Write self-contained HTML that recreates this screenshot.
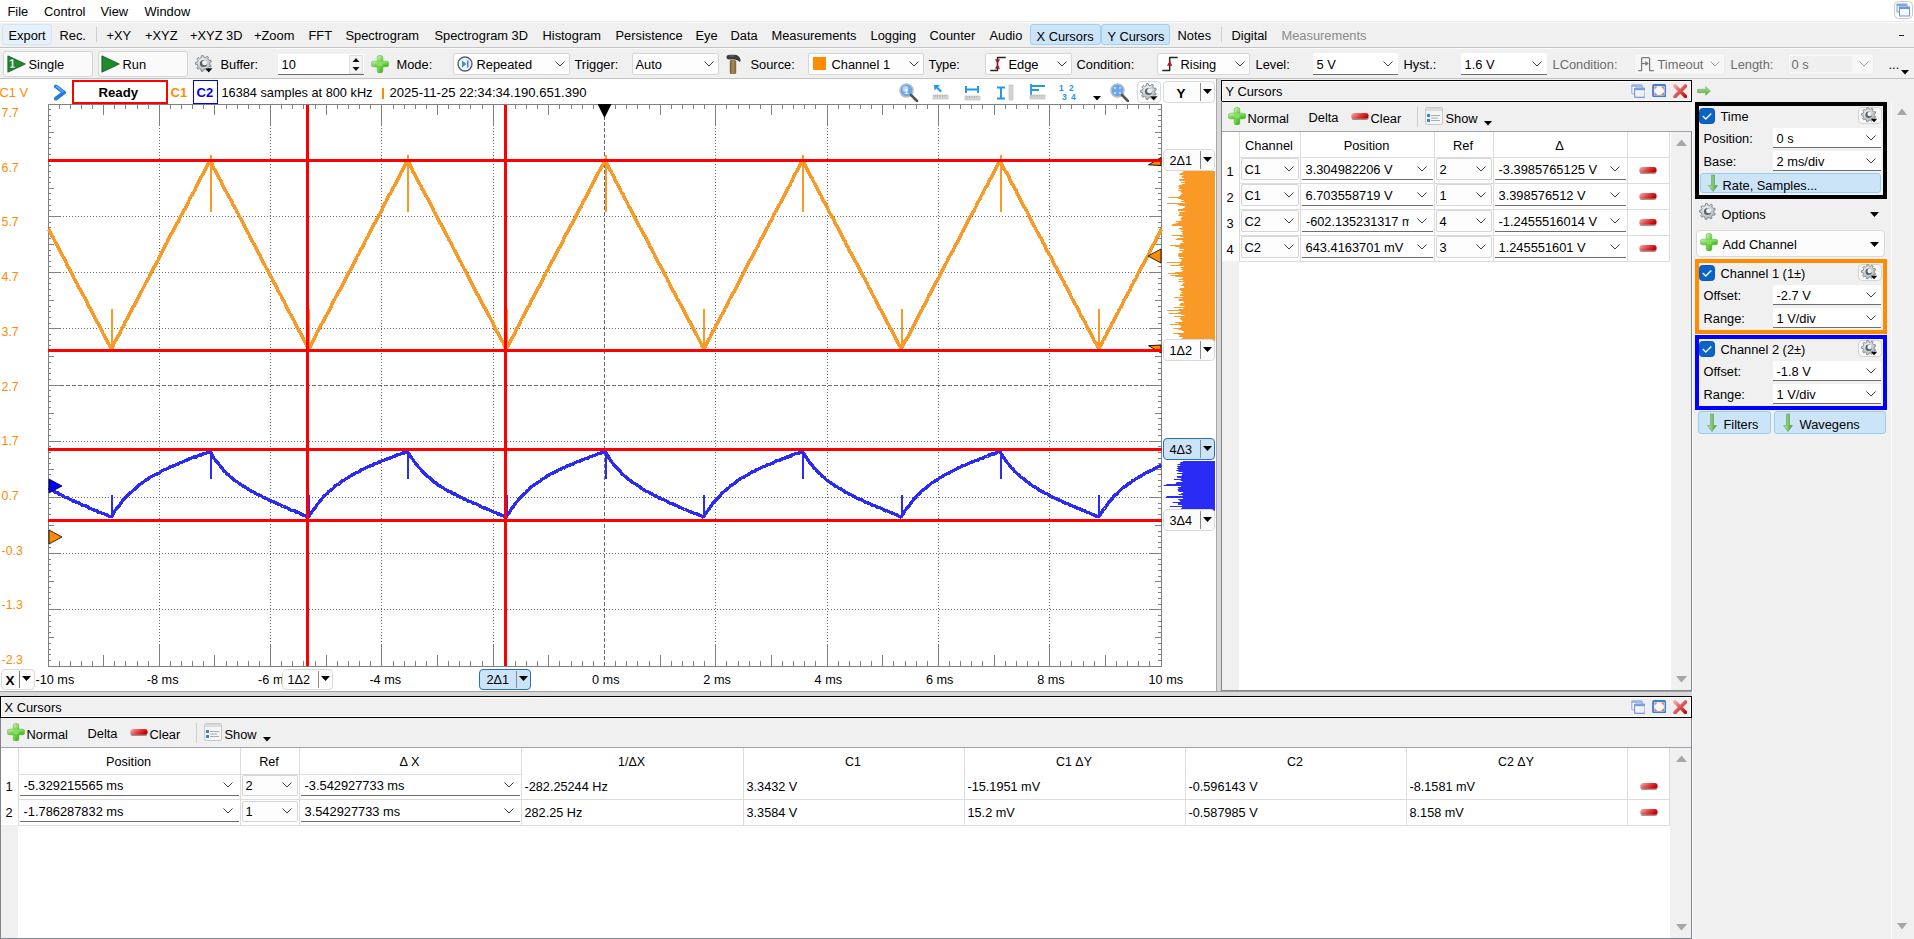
<!DOCTYPE html><html><head><meta charset="utf-8"><style>
html,body{margin:0;padding:0;width:1914px;height:939px;overflow:hidden;background:#f0f0f0;}
body{position:relative;font-family:"Liberation Sans",sans-serif;}
.r{position:absolute;}
.t{position:absolute;white-space:nowrap;font-family:"Liberation Sans",sans-serif;}
</style></head><body>
<div class="r" style="left:0px;top:0px;width:1914px;height:21px;background:#fff;"></div>
<div class="r" style="left:0px;top:21px;width:1914px;height:1px;background:#e8e8e8;"></div>
<div class="r" style="left:0px;top:22px;width:1914px;height:1px;background:#fdfdfd;"></div>
<div class="t" style="left:7.5px;top:5.12px;font-size:12.85px;line-height:14.353px;color:#000;">File</div>
<div class="t" style="left:44.0px;top:5.12px;font-size:12.85px;line-height:14.353px;color:#000;">Control</div>
<div class="t" style="left:100.5px;top:5.12px;font-size:12.85px;line-height:14.353px;color:#000;">View</div>
<div class="t" style="left:144.5px;top:5.12px;font-size:12.85px;line-height:14.353px;color:#000;">Window</div>
<svg class="r" style="left:1894px;top:1px;" width="19" height="18" viewBox="0 0 19 18"><rect x="0.5" y="0.5" width="18" height="17" rx="4" fill="#fff" stroke="#c8c8c8"/>
<rect x="3" y="3" width="10" height="8" fill="#eef3fb" stroke="#7fa5dc"/><rect x="3" y="3" width="10" height="2" fill="#7fa5dc"/>
<rect x="5.5" y="6" width="10" height="9" fill="#f4f7fc" stroke="#6f96d2"/><rect x="5.5" y="6" width="10" height="2" fill="#6f96d2"/></svg>
<div class="r" style="left:0px;top:23px;width:1914px;height:24px;background:#f0f0f0;"></div>
<div class="r" style="left:0px;top:47px;width:1914px;height:1px;background:#c4c4c4;"></div>
<div class="r" style="left:0px;top:48px;width:1914px;height:1px;background:#fbfbfb;"></div>
<div class="r" style="left:2px;top:24px;width:50px;height:21px;background:#e5f1fb;border:1px solid #d0e5f6;box-sizing:border-box;border-radius:3px;"></div>
<div class="r" style="left:1030px;top:24px;width:71px;height:21px;background:#cce4f7;border:1px solid #9fd0f5;box-sizing:border-box;border-radius:3px;"></div>
<div class="r" style="left:1101px;top:24px;width:69px;height:21px;background:#cce4f7;border:1px solid #9fd0f5;box-sizing:border-box;border-radius:3px;"></div>
<div class="r" style="left:96px;top:27px;width:1px;height:15px;background:#cfcfcf;"></div>
<div class="r" style="left:1221px;top:27px;width:1px;height:15px;background:#cfcfcf;"></div>
<div class="t" style="left:8.5px;top:29.12px;font-size:12.85px;line-height:14.353px;color:#000;">Export</div>
<div class="t" style="left:59.5px;top:29.12px;font-size:12.85px;line-height:14.353px;color:#000;">Rec.</div>
<div class="t" style="left:106.5px;top:29.12px;font-size:12.85px;line-height:14.353px;color:#000;">+XY</div>
<div class="t" style="left:145.0px;top:29.12px;font-size:12.85px;line-height:14.353px;color:#000;">+XYZ</div>
<div class="t" style="left:190.0px;top:29.12px;font-size:12.85px;line-height:14.353px;color:#000;">+XYZ 3D</div>
<div class="t" style="left:254.0px;top:29.12px;font-size:12.85px;line-height:14.353px;color:#000;">+Zoom</div>
<div class="t" style="left:308.5px;top:29.12px;font-size:12.85px;line-height:14.353px;color:#000;">FFT</div>
<div class="t" style="left:345.5px;top:29.12px;font-size:12.85px;line-height:14.353px;color:#000;">Spectrogram</div>
<div class="t" style="left:434.5px;top:29.12px;font-size:12.85px;line-height:14.353px;color:#000;">Spectrogram 3D</div>
<div class="t" style="left:542.5px;top:29.12px;font-size:12.85px;line-height:14.353px;color:#000;">Histogram</div>
<div class="t" style="left:615.5px;top:29.12px;font-size:12.85px;line-height:14.353px;color:#000;">Persistence</div>
<div class="t" style="left:695.5px;top:29.12px;font-size:12.85px;line-height:14.353px;color:#000;">Eye</div>
<div class="t" style="left:730.5px;top:29.12px;font-size:12.85px;line-height:14.353px;color:#000;">Data</div>
<div class="t" style="left:771.5px;top:29.12px;font-size:12.85px;line-height:14.353px;color:#000;">Measurements</div>
<div class="t" style="left:870.5px;top:29.12px;font-size:12.85px;line-height:14.353px;color:#000;">Logging</div>
<div class="t" style="left:929.5px;top:29.12px;font-size:12.85px;line-height:14.353px;color:#000;">Counter</div>
<div class="t" style="left:989.5px;top:29.12px;font-size:12.85px;line-height:14.353px;color:#000;">Audio</div>
<div class="t" style="left:1177.5px;top:29.12px;font-size:12.85px;line-height:14.353px;color:#000;">Notes</div>
<div class="t" style="left:1231.5px;top:29.12px;font-size:12.85px;line-height:14.353px;color:#000;">Digital</div>
<div class="t" style="left:1036.5px;top:30.12px;font-size:12.85px;line-height:14.353px;color:#000;">X Cursors</div>
<div class="t" style="left:1107.5px;top:30.12px;font-size:12.85px;line-height:14.353px;color:#000;">Y Cursors</div>
<div class="t" style="left:1281.5px;top:29.12px;font-size:12.85px;line-height:14.353px;color:#8a8a8a;">Measurements</div>
<div class="r" style="left:1899px;top:35px;width:5px;height:1px;background:#222;"></div>
<div class="r" style="left:0px;top:49px;width:1914px;height:29px;background:#f0f0f0;"></div>
<div class="r" style="left:0px;top:78px;width:1914px;height:1px;background:#c4c4c4;"></div>
<div class="r" style="left:3px;top:51px;width:90px;height:26px;background:#fafafa;border:1px solid #d4d4d4;box-sizing:border-box;border-radius:3px;"></div>
<div class="r" style="left:98px;top:51px;width:90px;height:26px;background:#fafafa;border:1px solid #d4d4d4;box-sizing:border-box;border-radius:3px;"></div>
<svg class="r" style="left:7px;top:55px;" width="19" height="18" viewBox="0 0 19 18"><path d="M1,1 L18,9 L1,17 Z" fill="#1f8a2a" stroke="#17702a" stroke-width="1.2" stroke-linejoin="round"/><path d="M2.6,5.3 L5,4 h1.6 v7.4 h1.6 v1.5 h-5.3 v-1.5 h1.6 v-5.3 l-1.9,0.8z" fill="#fff" stroke="#0d5a18" stroke-width="0.4"/></svg>
<svg class="r" style="left:101px;top:55px;" width="19" height="18" viewBox="0 0 19 18"><path d="M1,1 L18,9 L1,17 Z" fill="#1f8a2a" stroke="#17702a" stroke-width="1.2" stroke-linejoin="round"/></svg>
<div class="t" style="left:28.5px;top:58.12px;font-size:12.85px;line-height:14.353px;color:#000;">Single</div>
<div class="t" style="left:122.5px;top:58.12px;font-size:12.85px;line-height:14.353px;color:#000;">Run</div>
<svg class="r" style="left:195px;top:55px;" width="19" height="19" viewBox="0 0 19 19"><defs><radialGradient id="gg" cx="40%" cy="35%" r="70%"><stop offset="0" stop-color="#f4f5f6"/><stop offset="1" stop-color="#a9afb5"/></radialGradient></defs><path d="M14.70,9.59 L16.23,10.54 L15.56,12.26 L13.80,11.91 L12.55,13.33 L13.11,15.04 L11.50,15.92 L10.36,14.52 L8.50,14.80 L7.83,16.47 L6.03,16.11 L6.06,14.31 L4.45,13.33 L2.86,14.18 L1.72,12.74 L2.90,11.38 L2.30,9.59 L0.53,9.23 L0.58,7.39 L2.36,7.10 L3.04,5.35 L1.93,3.93 L3.15,2.55 L4.69,3.48 L6.35,2.58 L6.40,0.78 L8.22,0.50 L8.81,2.21 L10.65,2.58 L11.86,1.24 L13.43,2.20 L12.78,3.88 L13.96,5.35 L15.74,5.09 L16.33,6.84 L14.75,7.71z" fill="url(#gg)" stroke="#7d858c" stroke-width="0.9"/><circle cx="8.5" cy="8.5" r="3.6" fill="#56616b"/><circle cx="9.6" cy="7.8" r="2.5" fill="#eef0f2"/><path d="M9.5,13 h8.5 l-4.25,4.8 z" fill="#000" stroke="#fff" stroke-width="0.6"/></svg>
<div class="t" style="left:220.5px;top:58.12px;font-size:12.85px;line-height:14.353px;color:#000;">Buffer:</div>
<div class="r" style="left:278px;top:54px;width:86px;height:21px;background:#fff;border-bottom:1px solid #6e6e6e;box-sizing:border-box;"></div>
<div class="t" style="left:281.5px;top:58.12px;font-size:12.85px;line-height:14.353px;color:#000;">10</div>
<div class="r" style="left:349px;top:55px;width:14px;height:19px;background:#f4f4f4;border:1px solid #e0e0e0;box-sizing:border-box;"></div>
<svg class="r" style="left:350px;top:56px;" width="12" height="17" viewBox="0 0 12 17"><path d="M2.5,6 h7 l-3.5,-4 z M2.5,11 h7 l-3.5,4 z" fill="#111"/></svg>
<svg class="r" style="left:371px;top:55px;" width="18" height="18" viewBox="0 0 18 18"><defs><linearGradient id="pg" x1="0" y1="0" x2="0.7" y2="1"><stop offset="0" stop-color="#c8f8ae"/><stop offset="1" stop-color="#3cbc12"/></linearGradient></defs><rect x="6.2" y="0.5" width="5.6" height="17.5" rx="2.2" fill="url(#pg)" stroke="#52a83a" stroke-width="0.5"/><rect x="0.3" y="6.2" width="17.4" height="5.6" rx="2.2" fill="url(#pg)" stroke="#52a83a" stroke-width="0.5"/><rect x="6.6" y="6.5" width="4.8" height="5" fill="#86de62"/></svg>
<div class="t" style="left:396.5px;top:58.12px;font-size:12.85px;line-height:14.353px;color:#000;">Mode:</div>
<div class="r" style="left:453px;top:53px;width:117px;height:22px;background:#fdfdfd;border:1px solid #d6d6d6;box-sizing:border-box;border-radius:2px;"></div>
<div class="t" style="left:476.5px;top:58.12px;font-size:12.85px;line-height:14.353px;color:#000;">Repeated</div>
<svg class="r" style="left:555px;top:61px;" width="10" height="6" viewBox="0 0 10 6"><polyline points="0.5,0.5 5,5 9.5,0.5" fill="none" stroke="#404040" stroke-width="1"/></svg>
<svg class="r" style="left:457px;top:56px;" width="16" height="16" viewBox="0 0 16 16"><circle cx="8" cy="8" r="7" fill="#eef2f8" stroke="#5a5f66" stroke-width="1.4"/><path d="M5,4.5 L9.5,8 L5,11.5z M10,4.5 h1.6 v7 h-1.6z" fill="#3c8ee0"/></svg>
<div class="t" style="left:574.5px;top:58.12px;font-size:12.85px;line-height:14.353px;color:#000;">Trigger:</div>
<div class="r" style="left:632px;top:53px;width:87px;height:22px;background:#fdfdfd;border:1px solid #d6d6d6;box-sizing:border-box;border-radius:2px;"></div>
<div class="t" style="left:635.5px;top:58.12px;font-size:12.85px;line-height:14.353px;color:#000;">Auto</div>
<svg class="r" style="left:704px;top:61px;" width="10" height="6" viewBox="0 0 10 6"><polyline points="0.5,0.5 5,5 9.5,0.5" fill="none" stroke="#404040" stroke-width="1"/></svg>
<svg class="r" style="left:724px;top:53px;" width="18" height="22" viewBox="0 0 18 22"><defs><linearGradient id="hg" x1="0" y1="0" x2="1" y2="0"><stop offset="0" stop-color="#6e5228"/><stop offset="0.45" stop-color="#a88a58"/><stop offset="1" stop-color="#7a6238"/></linearGradient></defs><rect x="5.8" y="7" width="6.4" height="14" rx="1.6" fill="url(#hg)"/><path d="M2.4,4.2 q0.4,-2.4 3.5,-2.4 h4.6 q4.3,0 6,4.6 q0.3,1.6 -0.6,2.6 q-2.2,-2.6 -5.4,-2.6 h-5.6 q-2.2,0 -2.5,-2.2z" fill="#3b3b3b"/><path d="M5.5,3 h5" stroke="#777" stroke-width="0.8"/></svg>
<div class="t" style="left:750.5px;top:58.12px;font-size:12.85px;line-height:14.353px;color:#000;">Source:</div>
<div class="r" style="left:808px;top:53px;width:116px;height:22px;background:#fdfdfd;border:1px solid #d6d6d6;box-sizing:border-box;border-radius:2px;"></div>
<div class="t" style="left:831.5px;top:58.12px;font-size:12.85px;line-height:14.353px;color:#000;">Channel 1</div>
<svg class="r" style="left:909px;top:61px;" width="10" height="6" viewBox="0 0 10 6"><polyline points="0.5,0.5 5,5 9.5,0.5" fill="none" stroke="#404040" stroke-width="1"/></svg>
<div class="r" style="left:813px;top:57px;width:13px;height:13px;background:#ff8b00;"></div>
<div class="t" style="left:928.5px;top:58.12px;font-size:12.85px;line-height:14.353px;color:#000;">Type:</div>
<div class="r" style="left:985px;top:53px;width:87px;height:22px;background:#fdfdfd;border:1px solid #d6d6d6;box-sizing:border-box;border-radius:2px;"></div>
<div class="t" style="left:1008.5px;top:58.12px;font-size:12.85px;line-height:14.353px;color:#000;">Edge</div>
<svg class="r" style="left:1057px;top:61px;" width="10" height="6" viewBox="0 0 10 6"><polyline points="0.5,0.5 5,5 9.5,0.5" fill="none" stroke="#404040" stroke-width="1"/></svg>
<svg class="r" style="left:984px;top:52px;" width="30" height="24" viewBox="0 0 30 24"><path d="M6.3,18.6 h7.2 v-13.2 h8.2" fill="none" stroke="#262626" stroke-width="1.5" stroke-linejoin="round"/><path d="M11,7.3 h5 l-2.5,4.7z M11,16.7 h5 l-2.5,-4.7z" fill="#b3161c"/></svg>
<div class="t" style="left:1076.5px;top:58.12px;font-size:12.85px;line-height:14.353px;color:#000;">Condition:</div>
<div class="r" style="left:1157px;top:53px;width:93px;height:22px;background:#fdfdfd;border:1px solid #d6d6d6;box-sizing:border-box;border-radius:2px;"></div>
<div class="t" style="left:1180.5px;top:58.12px;font-size:12.85px;line-height:14.353px;color:#000;">Rising</div>
<svg class="r" style="left:1235px;top:61px;" width="10" height="6" viewBox="0 0 10 6"><polyline points="0.5,0.5 5,5 9.5,0.5" fill="none" stroke="#404040" stroke-width="1"/></svg>
<svg class="r" style="left:1156px;top:52px;" width="30" height="24" viewBox="0 0 30 24"><path d="M6.3,18.6 h7.4 v-13.2 h8" fill="none" stroke="#262626" stroke-width="1.5" stroke-linejoin="round"/><path d="M11,13.8 h5.4 l-2.7,-5z" fill="#b3161c"/></svg>
<div class="t" style="left:1255.5px;top:58.12px;font-size:12.85px;line-height:14.353px;color:#000;">Level:</div>
<div class="r" style="left:1313px;top:53px;width:85px;height:22px;background:#fff;border-bottom:1px solid #6e6e6e;box-sizing:border-box;border-radius:2px 2px 0 0;"></div>
<div class="t" style="left:1316.5px;top:58.12px;font-size:12.85px;line-height:14.353px;color:#000;">5 V</div>
<svg class="r" style="left:1383px;top:61px;" width="10" height="6" viewBox="0 0 10 6"><polyline points="0.5,0.5 5,5 9.5,0.5" fill="none" stroke="#404040" stroke-width="1"/></svg>
<div class="t" style="left:1403.5px;top:58.12px;font-size:12.85px;line-height:14.353px;color:#000;">Hyst.:</div>
<div class="r" style="left:1461px;top:53px;width:86px;height:22px;background:#fff;border-bottom:1px solid #6e6e6e;box-sizing:border-box;border-radius:2px 2px 0 0;"></div>
<div class="t" style="left:1464.5px;top:58.12px;font-size:12.85px;line-height:14.353px;color:#000;">1.6 V</div>
<svg class="r" style="left:1532px;top:61px;" width="10" height="6" viewBox="0 0 10 6"><polyline points="0.5,0.5 5,5 9.5,0.5" fill="none" stroke="#404040" stroke-width="1"/></svg>
<div class="t" style="left:1552.5px;top:58.12px;font-size:12.85px;line-height:14.353px;color:#6d6d6d;">LCondition:</div>
<div class="r" style="left:1634px;top:53px;width:91px;height:22px;background:#f7f7f7;border:1px solid #ebebeb;box-sizing:border-box;border-radius:2px;"></div>
<div class="t" style="left:1657.5px;top:58.12px;font-size:12.85px;line-height:14.353px;color:#6d6d6d;">Timeout</div>
<svg class="r" style="left:1710px;top:61px;" width="10" height="6" viewBox="0 0 10 6"><polyline points="0.5,0.5 5,5 9.5,0.5" fill="none" stroke="#a0a0a0" stroke-width="1"/></svg>
<svg class="r" style="left:1632px;top:52px;" width="30" height="24" viewBox="0 0 30 24"><path d="M6.2,18.6 h3.4 v-12 q0,-1 1,-1 h6 q1,0 1,1 v12 h4.3" fill="none" stroke="#7a7a7a" stroke-width="1.3" stroke-linejoin="round"/><path d="M9.6,11.5 h4" stroke="#7a7a7a" stroke-width="1.2"/><path d="M13.3,9 l3.6,2.5 -3.6,2.5z" fill="#7a7a7a"/></svg>
<div class="t" style="left:1730.5px;top:58.12px;font-size:12.85px;line-height:14.353px;color:#6d6d6d;">Length:</div>
<div class="r" style="left:1788px;top:53px;width:86px;height:22px;background:#f7f7f7;border:1px solid #ebebeb;box-sizing:border-box;border-radius:2px;"></div>
<div class="r" style="left:1790px;top:56px;width:62px;height:16px;background:#efefef;"></div>
<div class="t" style="left:1791.5px;top:58.12px;font-size:12.85px;line-height:14.353px;color:#6d6d6d;">0 s</div>
<svg class="r" style="left:1859px;top:61px;" width="10" height="6" viewBox="0 0 10 6"><polyline points="0.5,0.5 5,5 9.5,0.5" fill="none" stroke="#a0a0a0" stroke-width="1"/></svg>
<div class="t" style="left:1888.5px;top:58.12px;font-size:12.85px;line-height:14.353px;color:#000;">...</div>
<svg class="r" style="left:1901px;top:70px;" width="8" height="5" viewBox="0 0 8 5"><path d="M0,0 h8 l-4,4.5z" fill="#000"/></svg>
<div class="r" style="left:0px;top:79px;width:1216px;height:612px;background:#fff;"></div>
<div class="t" style="left:-0.5px;top:86.12px;font-size:12.85px;line-height:14.353px;color:#ff8c00;">C1 V</div>
<svg class="r" style="left:53px;top:84px;" width="15" height="17" viewBox="0 0 15 17"><polyline points="3,2.5 11,8.5 3,14.5" fill="none" stroke="#2478e0" stroke-width="4" stroke-linecap="round" stroke-linejoin="round"/><polyline points="3.5,2.5 10,7.5" fill="none" stroke="#7ab4f5" stroke-width="1.2" stroke-linecap="round"/></svg>
<div class="r" style="left:72px;top:80px;width:96px;height:24px;border:2px solid #ff0000;box-sizing:border-box;background:#fff;"></div>
<div class="t" style="left:98.5px;top:85.80px;font-size:13.2px;line-height:14.744px;color:#000;font-weight:bold;">Ready</div>
<div class="t" style="left:170.5px;top:85.98px;font-size:13px;line-height:14.521px;color:#ff8c00;font-weight:bold;">C1</div>
<div class="r" style="left:193px;top:80px;width:25px;height:24px;border:1px solid #0000ff;box-sizing:border-box;"></div>
<div class="t" style="left:196.5px;top:85.98px;font-size:13px;line-height:14.521px;color:#0000ff;font-weight:bold;">C2</div>
<div class="t" style="left:221.5px;top:86.21px;font-size:12.75px;line-height:14.242px;color:#000;">16384 samples at 800 kHz</div>
<div class="r" style="left:382px;top:88px;width:2px;height:11px;background:#ff8c00;"></div>
<div class="t" style="left:389.5px;top:85.89px;font-size:13.1px;line-height:14.633px;color:#000;">2025-11-25 22:34:34.190.651.390</div>
<svg class="r" style="left:899px;top:83px;" width="20" height="19" viewBox="0 0 20 19"><circle cx="7.5" cy="7.5" r="6.5" fill="#6aa6ec" stroke="#b8bcc4" stroke-width="1.6"/><circle cx="6.5" cy="6" r="3" fill="#b9d6f6"/><text x="5" y="10.5" font-family="Liberation Sans" font-weight="bold" font-size="8" fill="#fff">1</text><line x1="12" y1="12" x2="18" y2="18" stroke="#555" stroke-width="2.6" stroke-linecap="round"/></svg>
<svg class="r" style="left:932px;top:84px;" width="17" height="16" viewBox="0 0 17 16"><path d="M2,1 l6,0 -2,2 4,4 -1.5,1.5 -4,-4 -2,2z" fill="#2196f3"/><rect x="1" y="11" width="15" height="4" fill="#d4d4d4" stroke="#b8b8b8" stroke-width="0.6"/><line x1="3.0" y1="11" x2="3.0" y2="13" stroke="#999" stroke-width="0.5"/><line x1="5.5" y1="11" x2="5.5" y2="13" stroke="#999" stroke-width="0.5"/><line x1="8.0" y1="11" x2="8.0" y2="13" stroke="#999" stroke-width="0.5"/><line x1="10.5" y1="11" x2="10.5" y2="13" stroke="#999" stroke-width="0.5"/><line x1="13.0" y1="11" x2="13.0" y2="13" stroke="#999" stroke-width="0.5"/></svg>
<svg class="r" style="left:964px;top:84px;" width="18" height="17" viewBox="0 0 18 17"><path d="M2,2 v7 M2,5.5 h12 M14,2 v7" fill="none" stroke="#2196f3" stroke-width="2"/><rect x="1" y="12" width="15" height="4" fill="#d4d4d4" stroke="#b8b8b8" stroke-width="0.6"/><line x1="3.0" y1="12" x2="3.0" y2="14" stroke="#999" stroke-width="0.5"/><line x1="5.5" y1="12" x2="5.5" y2="14" stroke="#999" stroke-width="0.5"/><line x1="8.0" y1="12" x2="8.0" y2="14" stroke="#999" stroke-width="0.5"/><line x1="10.5" y1="12" x2="10.5" y2="14" stroke="#999" stroke-width="0.5"/><line x1="13.0" y1="12" x2="13.0" y2="14" stroke="#999" stroke-width="0.5"/></svg>
<svg class="r" style="left:996px;top:84px;" width="18" height="17" viewBox="0 0 18 17"><path d="M1,3.5 h8 M5,3.5 v11 M1,14.5 h8" fill="none" stroke="#2196f3" stroke-width="2"/><rect x="13" y="1" width="4" height="15" fill="#d4d4d4" stroke="#b8b8b8" stroke-width="0.6"/></svg>
<svg class="r" style="left:1029px;top:83px;" width="17" height="17" viewBox="0 0 17 17"><path d="M2,1 v11 M2,3 h14 M2,7 h8" fill="none" stroke="#2196f3" stroke-width="1.8"/><rect x="1" y="12" width="15" height="4" fill="#d4d4d4" stroke="#b8b8b8" stroke-width="0.6"/><line x1="3.0" y1="12" x2="3.0" y2="14" stroke="#999" stroke-width="0.5"/><line x1="5.5" y1="12" x2="5.5" y2="14" stroke="#999" stroke-width="0.5"/><line x1="8.0" y1="12" x2="8.0" y2="14" stroke="#999" stroke-width="0.5"/><line x1="10.5" y1="12" x2="10.5" y2="14" stroke="#999" stroke-width="0.5"/><line x1="13.0" y1="12" x2="13.0" y2="14" stroke="#999" stroke-width="0.5"/></svg>
<svg class="r" style="left:1058px;top:83px;" width="20" height="18" viewBox="0 0 20 18"><text x="1" y="8" font-family="Liberation Sans" font-weight="bold" font-size="8.5" fill="#2196f3">1</text><text x="11" y="8" font-family="Liberation Sans" font-weight="bold" font-size="8.5" fill="#2196f3">2</text><text x="4" y="17" font-family="Liberation Sans" font-weight="bold" font-size="8.5" fill="#2196f3">3</text><text x="13" y="17" font-family="Liberation Sans" font-weight="bold" font-size="8.5" fill="#2196f3">4</text></svg>
<svg class="r" style="left:1093px;top:96px;" width="8" height="5" viewBox="0 0 8 5"><path d="M0,0 h8 l-4,4.5z" fill="#000"/></svg>
<svg class="r" style="left:1110px;top:83px;" width="19" height="19" viewBox="0 0 19 19"><circle cx="7.5" cy="7.5" r="6.5" fill="#6aa6ec" stroke="#b8bcc4" stroke-width="1.6"/><circle cx="5" cy="5" r="1" fill="#dbe8f8"/><circle cx="10" cy="5" r="1" fill="#dbe8f8"/><circle cx="5" cy="10" r="1" fill="#dbe8f8"/><circle cx="10" cy="10" r="1" fill="#dbe8f8"/><line x1="12" y1="12" x2="18" y2="18" stroke="#555" stroke-width="2.6" stroke-linecap="round"/></svg>
<div class="r" style="left:1137px;top:81px;width:24px;height:22px;background:#fcfcfc;border:1px solid #d9d9d9;box-sizing:border-box;border-radius:4px;"></div>
<svg class="r" style="left:1140px;top:83px;" width="19" height="19" viewBox="0 0 19 19"><defs><radialGradient id="gg" cx="40%" cy="35%" r="70%"><stop offset="0" stop-color="#f4f5f6"/><stop offset="1" stop-color="#a9afb5"/></radialGradient></defs><path d="M14.70,9.59 L16.23,10.54 L15.56,12.26 L13.80,11.91 L12.55,13.33 L13.11,15.04 L11.50,15.92 L10.36,14.52 L8.50,14.80 L7.83,16.47 L6.03,16.11 L6.06,14.31 L4.45,13.33 L2.86,14.18 L1.72,12.74 L2.90,11.38 L2.30,9.59 L0.53,9.23 L0.58,7.39 L2.36,7.10 L3.04,5.35 L1.93,3.93 L3.15,2.55 L4.69,3.48 L6.35,2.58 L6.40,0.78 L8.22,0.50 L8.81,2.21 L10.65,2.58 L11.86,1.24 L13.43,2.20 L12.78,3.88 L13.96,5.35 L15.74,5.09 L16.33,6.84 L14.75,7.71z" fill="url(#gg)" stroke="#7d858c" stroke-width="0.9"/><circle cx="8.5" cy="8.5" r="3.6" fill="#56616b"/><circle cx="9.6" cy="7.8" r="2.5" fill="#eef0f2"/><path d="M9.5,13 h8.5 l-4.25,4.8 z" fill="#000" stroke="#fff" stroke-width="0.6"/></svg>
<div class="r" style="left:1163px;top:81px;width:52px;height:22px;background:#fcfcfc;border:1px solid #d9d9d9;box-sizing:border-box;border-radius:4px;"></div>
<div class="r" style="left:1200px;top:83px;width:1px;height:18px;background:#8c8c8c;"></div>
<svg class="r" style="left:1203px;top:89px;" width="9" height="6" viewBox="0 0 9 6"><path d="M0,0 h9 l-4.5,5z" fill="#000"/></svg>
<div class="t" style="left:1176.5px;top:85.53px;font-size:13.5px;line-height:15.079px;color:#000;font-weight:bold;">Y</div>
<svg class="r" style="left:0px;top:0px;" width="1216" height="691" viewBox="0 0 1216 691"><rect x="48.5" y="104.5" width="1113" height="562" fill="#fff" stroke="#808080" stroke-width="1" shape-rendering="crispEdges"/><line x1="159.5" y1="104" x2="159.5" y2="666" stroke="#6a6a6a" stroke-width="1" stroke-dasharray="1,2" shape-rendering="crispEdges"/><line x1="270.5" y1="104" x2="270.5" y2="666" stroke="#6a6a6a" stroke-width="1" stroke-dasharray="1,2" shape-rendering="crispEdges"/><line x1="381.5" y1="104" x2="381.5" y2="666" stroke="#6a6a6a" stroke-width="1" stroke-dasharray="1,2" shape-rendering="crispEdges"/><line x1="493.5" y1="104" x2="493.5" y2="666" stroke="#6a6a6a" stroke-width="1" stroke-dasharray="1,2" shape-rendering="crispEdges"/><line x1="604.5" y1="104" x2="604.5" y2="666" stroke="#6a6a6a" stroke-width="1" stroke-dasharray="4,2" shape-rendering="crispEdges"/><line x1="715.5" y1="104" x2="715.5" y2="666" stroke="#6a6a6a" stroke-width="1" stroke-dasharray="1,2" shape-rendering="crispEdges"/><line x1="827.5" y1="104" x2="827.5" y2="666" stroke="#6a6a6a" stroke-width="1" stroke-dasharray="1,2" shape-rendering="crispEdges"/><line x1="938.5" y1="104" x2="938.5" y2="666" stroke="#6a6a6a" stroke-width="1" stroke-dasharray="1,2" shape-rendering="crispEdges"/><line x1="1049.5" y1="104" x2="1049.5" y2="666" stroke="#6a6a6a" stroke-width="1" stroke-dasharray="1,2" shape-rendering="crispEdges"/><line x1="48" y1="160.5" x2="1161" y2="160.5" stroke="#6a6a6a" stroke-width="1" stroke-dasharray="1,2" shape-rendering="crispEdges"/><line x1="48" y1="216.5" x2="1161" y2="216.5" stroke="#6a6a6a" stroke-width="1" stroke-dasharray="1,2" shape-rendering="crispEdges"/><line x1="48" y1="272.5" x2="1161" y2="272.5" stroke="#6a6a6a" stroke-width="1" stroke-dasharray="1,2" shape-rendering="crispEdges"/><line x1="48" y1="328.5" x2="1161" y2="328.5" stroke="#6a6a6a" stroke-width="1" stroke-dasharray="1,2" shape-rendering="crispEdges"/><line x1="48" y1="385.5" x2="1161" y2="385.5" stroke="#6a6a6a" stroke-width="1" stroke-dasharray="4,2" shape-rendering="crispEdges"/><line x1="48" y1="441.5" x2="1161" y2="441.5" stroke="#6a6a6a" stroke-width="1" stroke-dasharray="1,2" shape-rendering="crispEdges"/><line x1="48" y1="497.5" x2="1161" y2="497.5" stroke="#6a6a6a" stroke-width="1" stroke-dasharray="1,2" shape-rendering="crispEdges"/><line x1="48" y1="553.5" x2="1161" y2="553.5" stroke="#6a6a6a" stroke-width="1" stroke-dasharray="1,2" shape-rendering="crispEdges"/><line x1="48" y1="609.5" x2="1161" y2="609.5" stroke="#6a6a6a" stroke-width="1" stroke-dasharray="1,2" shape-rendering="crispEdges"/><path d="M59.5,104v5M59.5,666v-5M70.5,104v5M70.5,666v-5M81.5,104v5M81.5,666v-5M92.5,104v5M92.5,666v-5M103.5,104v11M103.5,666v-11M114.5,104v5M114.5,666v-5M125.5,104v5M125.5,666v-5M137.5,104v5M137.5,666v-5M148.5,104v5M148.5,666v-5M159.5,104v22M159.5,666v-22M170.5,104v5M170.5,666v-5M181.5,104v5M181.5,666v-5M192.5,104v5M192.5,666v-5M203.5,104v5M203.5,666v-5M214.5,104v11M214.5,666v-11M226.5,104v5M226.5,666v-5M237.5,104v5M237.5,666v-5M248.5,104v5M248.5,666v-5M259.5,104v5M259.5,666v-5M270.5,104v22M270.5,666v-22M281.5,104v5M281.5,666v-5M292.5,104v5M292.5,666v-5M303.5,104v5M303.5,666v-5M315.5,104v5M315.5,666v-5M326.5,104v11M326.5,666v-11M337.5,104v5M337.5,666v-5M348.5,104v5M348.5,666v-5M359.5,104v5M359.5,666v-5M370.5,104v5M370.5,666v-5M381.5,104v22M381.5,666v-22M393.5,104v5M393.5,666v-5M404.5,104v5M404.5,666v-5M415.5,104v5M415.5,666v-5M426.5,104v5M426.5,666v-5M437.5,104v11M437.5,666v-11M448.5,104v5M448.5,666v-5M459.5,104v5M459.5,666v-5M470.5,104v5M470.5,666v-5M482.5,104v5M482.5,666v-5M493.5,104v22M493.5,666v-22M504.5,104v5M504.5,666v-5M515.5,104v5M515.5,666v-5M526.5,104v5M526.5,666v-5M537.5,104v5M537.5,666v-5M548.5,104v11M548.5,666v-11M559.5,104v5M559.5,666v-5M571.5,104v5M571.5,666v-5M582.5,104v5M582.5,666v-5M593.5,104v5M593.5,666v-5M604.5,104v0M604.5,666v0M615.5,104v5M615.5,666v-5M626.5,104v5M626.5,666v-5M637.5,104v5M637.5,666v-5M649.5,104v5M649.5,666v-5M660.5,104v11M660.5,666v-11M671.5,104v5M671.5,666v-5M682.5,104v5M682.5,666v-5M693.5,104v5M693.5,666v-5M704.5,104v5M704.5,666v-5M715.5,104v22M715.5,666v-22M726.5,104v5M726.5,666v-5M738.5,104v5M738.5,666v-5M749.5,104v5M749.5,666v-5M760.5,104v5M760.5,666v-5M771.5,104v11M771.5,666v-11M782.5,104v5M782.5,666v-5M793.5,104v5M793.5,666v-5M804.5,104v5M804.5,666v-5M815.5,104v5M815.5,666v-5M827.5,104v22M827.5,666v-22M838.5,104v5M838.5,666v-5M849.5,104v5M849.5,666v-5M860.5,104v5M860.5,666v-5M871.5,104v5M871.5,666v-5M882.5,104v11M882.5,666v-11M893.5,104v5M893.5,666v-5M905.5,104v5M905.5,666v-5M916.5,104v5M916.5,666v-5M927.5,104v5M927.5,666v-5M938.5,104v22M938.5,666v-22M949.5,104v5M949.5,666v-5M960.5,104v5M960.5,666v-5M971.5,104v5M971.5,666v-5M982.5,104v5M982.5,666v-5M994.5,104v11M994.5,666v-11M1005.5,104v5M1005.5,666v-5M1016.5,104v5M1016.5,666v-5M1027.5,104v5M1027.5,666v-5M1038.5,104v5M1038.5,666v-5M1049.5,104v22M1049.5,666v-22M1060.5,104v5M1060.5,666v-5M1071.5,104v5M1071.5,666v-5M1083.5,104v5M1083.5,666v-5M1094.5,104v5M1094.5,666v-5M1105.5,104v11M1105.5,666v-11M1116.5,104v5M1116.5,666v-5M1127.5,104v5M1127.5,666v-5M1138.5,104v5M1138.5,666v-5M1149.5,104v5M1149.5,666v-5M48,109.5h3M1161,109.5h-3M48,115.5h3M1161,115.5h-3M48,120.5h3M1161,120.5h-3M48,126.5h3M1161,126.5h-3M48,132.5h6M1161,132.5h-6M48,137.5h3M1161,137.5h-3M48,143.5h3M1161,143.5h-3M48,148.5h3M1161,148.5h-3M48,154.5h3M1161,154.5h-3M48,160.5h12M1161,160.5h-12M48,165.5h3M1161,165.5h-3M48,171.5h3M1161,171.5h-3M48,177.5h3M1161,177.5h-3M48,182.5h3M1161,182.5h-3M48,188.5h6M1161,188.5h-6M48,193.5h3M1161,193.5h-3M48,199.5h3M1161,199.5h-3M48,205.5h3M1161,205.5h-3M48,210.5h3M1161,210.5h-3M48,216.5h12M1161,216.5h-12M48,222.5h3M1161,222.5h-3M48,227.5h3M1161,227.5h-3M48,233.5h3M1161,233.5h-3M48,238.5h3M1161,238.5h-3M48,244.5h6M1161,244.5h-6M48,250.5h3M1161,250.5h-3M48,255.5h3M1161,255.5h-3M48,261.5h3M1161,261.5h-3M48,266.5h3M1161,266.5h-3M48,272.5h12M1161,272.5h-12M48,278.5h3M1161,278.5h-3M48,283.5h3M1161,283.5h-3M48,289.5h3M1161,289.5h-3M48,295.5h3M1161,295.5h-3M48,300.5h6M1161,300.5h-6M48,306.5h3M1161,306.5h-3M48,311.5h3M1161,311.5h-3M48,317.5h3M1161,317.5h-3M48,323.5h3M1161,323.5h-3M48,328.5h12M1161,328.5h-12M48,334.5h3M1161,334.5h-3M48,340.5h3M1161,340.5h-3M48,345.5h3M1161,345.5h-3M48,351.5h3M1161,351.5h-3M48,356.5h6M1161,356.5h-6M48,362.5h3M1161,362.5h-3M48,368.5h3M1161,368.5h-3M48,373.5h3M1161,373.5h-3M48,379.5h3M1161,379.5h-3M48,385.5h12M1161,385.5h-12M48,390.5h3M1161,390.5h-3M48,396.5h3M1161,396.5h-3M48,401.5h3M1161,401.5h-3M48,407.5h3M1161,407.5h-3M48,413.5h6M1161,413.5h-6M48,418.5h3M1161,418.5h-3M48,424.5h3M1161,424.5h-3M48,429.5h3M1161,429.5h-3M48,435.5h3M1161,435.5h-3M48,441.5h12M1161,441.5h-12M48,446.5h3M1161,446.5h-3M48,452.5h3M1161,452.5h-3M48,458.5h3M1161,458.5h-3M48,463.5h3M1161,463.5h-3M48,469.5h6M1161,469.5h-6M48,474.5h3M1161,474.5h-3M48,480.5h3M1161,480.5h-3M48,486.5h3M1161,486.5h-3M48,491.5h3M1161,491.5h-3M48,497.5h12M1161,497.5h-12M48,503.5h3M1161,503.5h-3M48,508.5h3M1161,508.5h-3M48,514.5h3M1161,514.5h-3M48,519.5h3M1161,519.5h-3M48,525.5h6M1161,525.5h-6M48,531.5h3M1161,531.5h-3M48,536.5h3M1161,536.5h-3M48,542.5h3M1161,542.5h-3M48,547.5h3M1161,547.5h-3M48,553.5h12M1161,553.5h-12M48,559.5h3M1161,559.5h-3M48,564.5h3M1161,564.5h-3M48,570.5h3M1161,570.5h-3M48,576.5h3M1161,576.5h-3M48,581.5h6M1161,581.5h-6M48,587.5h3M1161,587.5h-3M48,592.5h3M1161,592.5h-3M48,598.5h3M1161,598.5h-3M48,604.5h3M1161,604.5h-3M48,609.5h12M1161,609.5h-12M48,615.5h3M1161,615.5h-3M48,621.5h3M1161,621.5h-3M48,626.5h3M1161,626.5h-3M48,632.5h3M1161,632.5h-3M48,637.5h6M1161,637.5h-6M48,643.5h3M1161,643.5h-3M48,649.5h3M1161,649.5h-3M48,654.5h3M1161,654.5h-3M48,660.5h3M1161,660.5h-3" stroke="#808080" stroke-width="1" fill="none" shape-rendering="crispEdges"/><path d="M597.5,104 h14 l-7,14z" fill="#000"/><polyline points="48.5,229.0 50.0,231.6 51.5,235.2 53.0,237.2 54.5,240.7 56.0,243.3 57.5,245.8 59.0,249.3 60.5,251.5 62.0,254.9 63.5,257.2 65.0,260.1 66.5,263.5 68.0,266.9 69.5,268.8 71.0,271.8 72.5,275.2 74.0,278.5 75.5,280.9 77.0,283.5 78.5,287.2 80.0,288.7 81.5,292.7 83.0,294.8 84.5,297.4 86.0,300.3 87.5,303.4 89.0,307.0 90.5,308.9 92.0,312.4 93.5,315.3 95.0,317.8 96.5,320.9 98.0,323.1 99.5,326.0 101.0,329.0 102.5,332.6 104.0,335.1 105.5,337.8 107.0,341.0 108.5,343.7 110.0,346.3 111.5,348.9 113.0,345.9 114.5,342.4 116.0,340.0 117.5,337.1 119.0,334.7 120.5,331.7 122.0,328.2 123.5,326.3 125.0,322.2 126.5,319.8 128.0,317.4 129.5,313.7 131.0,311.3 132.5,307.8 134.0,305.8 135.5,303.1 137.0,299.9 138.5,297.5 140.0,293.9 141.5,291.5 143.0,288.5 144.5,285.6 146.0,282.6 147.5,280.3 149.0,277.6 150.5,274.0 152.0,271.4 153.5,267.7 155.0,265.8 156.5,262.8 158.0,260.5 159.5,257.3 161.0,253.7 162.5,251.0 164.0,248.5 165.5,244.8 167.0,242.5 168.5,239.3 170.0,236.3 171.5,233.4 173.0,231.5 174.5,227.7 176.0,225.0 177.5,222.4 179.0,220.2 180.5,216.2 182.0,213.9 183.5,211.2 185.0,208.8 186.5,205.8 188.0,203.0 189.5,199.3 191.0,196.6 192.5,193.7 194.0,191.6 195.5,188.8 197.0,184.8 198.5,182.0 200.0,179.2 201.5,176.4 203.0,173.8 204.5,171.1 206.0,167.8 207.5,164.6 209.0,162.3 210.5,161.3 212.0,164.4 213.5,167.8 215.0,170.3 216.5,172.9 218.0,175.9 219.5,178.9 221.0,180.9 222.5,184.9 224.0,187.6 225.5,190.6 227.0,193.4 228.5,195.7 230.0,198.5 231.5,201.0 233.0,204.6 234.5,206.7 236.0,209.5 237.5,212.6 239.0,215.4 240.5,218.5 242.0,221.0 243.5,223.7 245.0,226.8 246.5,229.6 248.0,232.8 249.5,235.2 251.0,239.3 252.5,241.8 254.0,244.0 255.5,247.0 257.0,250.0 258.5,252.9 260.0,255.4 261.5,259.3 263.0,262.4 264.5,264.5 266.0,267.4 267.5,269.7 269.0,272.6 270.5,275.8 272.0,278.5 273.5,282.2 275.0,284.1 276.5,286.8 278.0,290.9 279.5,293.2 281.0,295.5 282.5,299.0 284.0,301.1 285.5,304.7 287.0,308.2 288.5,310.9 290.0,313.5 291.5,315.7 293.0,318.7 294.5,321.3 296.0,325.0 297.5,327.6 299.0,330.8 300.5,333.0 302.0,335.7 303.5,339.4 305.0,342.5 306.5,345.2 308.0,348.0 309.5,348.0 311.0,345.0 312.5,341.5 314.0,339.0 315.5,335.9 317.0,332.6 318.5,329.7 320.0,327.2 321.5,324.3 323.0,322.1 324.5,319.6 326.0,316.0 327.5,313.8 329.0,311.0 330.5,308.1 332.0,304.4 333.5,301.4 335.0,298.5 336.5,295.6 338.0,292.8 339.5,290.5 341.0,288.0 342.5,285.1 344.0,281.7 345.5,279.1 347.0,276.4 348.5,272.5 350.0,270.5 351.5,268.0 353.0,264.9 354.5,262.0 356.0,258.8 357.5,255.5 359.0,253.5 360.5,250.0 362.0,247.8 363.5,245.2 365.0,241.5 366.5,238.6 368.0,236.5 369.5,233.4 371.0,229.7 372.5,226.8 374.0,224.0 375.5,222.2 377.0,219.1 378.5,215.4 380.0,213.5 381.5,210.8 383.0,207.5 384.5,204.2 386.0,201.6 387.5,198.2 389.0,195.1 390.5,193.6 392.0,190.3 393.5,187.3 395.0,185.0 396.5,181.4 398.0,179.2 399.5,176.2 401.0,172.5 402.5,169.7 404.0,166.9 405.5,164.0 407.0,161.6 408.5,162.1 410.0,165.2 411.5,167.6 413.0,171.6 414.5,173.7 416.0,176.7 417.5,179.7 419.0,183.0 420.5,185.2 422.0,188.8 423.5,191.0 425.0,193.9 426.5,196.8 428.0,199.0 429.5,202.4 431.0,204.9 432.5,207.5 434.0,211.5 435.5,213.5 437.0,216.8 438.5,220.0 440.0,222.6 441.5,225.2 443.0,228.3 444.5,231.2 446.0,234.4 447.5,236.3 449.0,239.8 450.5,242.2 452.0,245.1 453.5,248.7 455.0,251.2 456.5,254.1 458.0,257.3 459.5,260.3 461.0,262.5 462.5,265.6 464.0,268.4 465.5,271.2 467.0,274.3 468.5,276.9 470.0,279.9 471.5,282.6 473.0,286.1 474.5,288.7 476.0,291.8 477.5,294.7 479.0,296.6 480.5,299.9 482.0,303.3 483.5,306.0 485.0,307.9 486.5,310.8 488.0,314.1 489.5,316.4 491.0,319.5 492.5,322.2 494.0,325.9 495.5,328.9 497.0,331.9 498.5,333.7 500.0,337.4 501.5,340.2 503.0,342.3 504.5,346.2 506.0,349.2 507.5,346.2 509.0,344.4 510.5,340.7 512.0,338.0 513.5,335.8 515.0,332.8 516.5,329.0 518.0,326.5 519.5,323.7 521.0,320.6 522.5,317.6 524.0,314.9 525.5,312.6 527.0,308.7 528.5,306.6 530.0,303.6 531.5,300.1 533.0,297.7 534.5,295.2 536.0,292.2 537.5,288.7 539.0,287.2 540.5,284.0 542.0,281.4 543.5,277.3 545.0,274.7 546.5,271.5 548.0,269.7 549.5,266.1 551.0,263.1 552.5,260.6 554.0,258.4 555.5,255.4 557.0,251.8 558.5,248.8 560.0,247.0 561.5,243.6 563.0,241.0 564.5,237.2 566.0,234.3 567.5,232.3 569.0,229.1 570.5,225.8 572.0,224.1 573.5,220.8 575.0,218.2 576.5,214.3 578.0,212.5 579.5,208.6 581.0,206.8 582.5,203.4 584.0,200.4 585.5,197.8 587.0,195.5 588.5,191.7 590.0,188.6 591.5,186.3 593.0,183.0 594.5,180.0 596.0,177.2 597.5,174.2 599.0,171.5 600.5,168.8 602.0,166.0 603.5,163.7 605.0,160.2 606.5,163.4 608.0,165.8 609.5,168.9 611.0,171.3 612.5,174.5 614.0,177.0 615.5,180.9 617.0,183.5 618.5,185.8 620.0,189.1 621.5,192.6 623.0,194.3 624.5,198.2 626.0,200.5 627.5,203.4 629.0,206.8 630.5,209.0 632.0,212.0 633.5,215.2 635.0,218.4 636.5,220.4 638.0,224.0 639.5,226.6 641.0,229.4 642.5,231.9 644.0,234.7 645.5,237.2 647.0,240.2 648.5,242.9 650.0,246.7 651.5,248.9 653.0,251.7 654.5,254.4 656.0,258.3 657.5,261.2 659.0,263.8 660.5,266.1 662.0,268.9 663.5,271.9 665.0,275.0 666.5,277.4 668.0,280.7 669.5,283.3 671.0,287.1 672.5,290.0 674.0,292.3 675.5,294.7 677.0,298.6 678.5,300.5 680.0,303.5 681.5,305.8 683.0,309.2 684.5,312.2 686.0,315.1 687.5,317.6 689.0,320.9 690.5,323.0 692.0,326.2 693.5,328.9 695.0,332.2 696.5,334.5 698.0,337.4 699.5,340.6 701.0,343.4 702.5,346.7 704.0,348.6 705.5,346.0 707.0,343.0 708.5,340.2 710.0,337.6 711.5,334.1 713.0,331.1 714.5,329.2 716.0,325.1 717.5,323.1 719.0,320.1 720.5,316.4 722.0,314.6 723.5,311.8 725.0,308.6 726.5,305.9 728.0,303.1 729.5,299.3 731.0,297.0 732.5,294.1 734.0,291.7 735.5,288.8 737.0,286.0 738.5,282.8 740.0,280.4 741.5,277.2 743.0,274.3 744.5,270.8 746.0,267.7 747.5,265.0 749.0,262.4 750.5,259.2 752.0,257.4 753.5,254.1 755.0,251.3 756.5,248.5 758.0,245.7 759.5,242.6 761.0,239.0 762.5,237.3 764.0,234.3 765.5,231.1 767.0,228.3 768.5,225.6 770.0,221.9 771.5,220.0 773.0,216.5 774.5,213.4 776.0,210.8 777.5,208.5 779.0,204.9 780.5,202.8 782.0,200.3 783.5,196.8 785.0,193.7 786.5,191.0 788.0,188.4 789.5,185.7 791.0,182.6 792.5,179.8 794.0,176.1 795.5,173.4 797.0,170.7 798.5,168.5 800.0,165.0 801.5,162.5 803.0,160.8 804.5,163.7 806.0,166.9 807.5,170.3 809.0,173.2 810.5,176.0 812.0,178.3 813.5,181.5 815.0,184.3 816.5,187.2 818.0,189.6 819.5,193.5 821.0,195.4 822.5,199.3 824.0,202.2 825.5,203.7 827.0,207.2 828.5,210.6 830.0,213.6 831.5,215.8 833.0,218.4 834.5,221.2 836.0,225.1 837.5,226.9 839.0,230.3 840.5,232.5 842.0,235.9 843.5,239.4 845.0,241.1 846.5,244.9 848.0,247.4 849.5,250.8 851.0,253.4 852.5,255.6 854.0,259.4 855.5,261.7 857.0,263.9 858.5,266.7 860.0,270.2 861.5,273.1 863.0,275.7 864.5,278.3 866.0,281.5 867.5,284.3 869.0,287.9 870.5,289.6 872.0,293.5 873.5,296.5 875.0,298.4 876.5,302.4 878.0,304.9 879.5,308.0 881.0,310.1 882.5,313.0 884.0,315.9 885.5,319.6 887.0,321.9 888.5,324.5 890.0,327.4 891.5,330.1 893.0,332.6 894.5,335.6 896.0,339.4 897.5,341.5 899.0,345.3 900.5,347.2 902.0,347.2 903.5,344.7 905.0,341.4 906.5,338.8 908.0,336.8 909.5,333.8 911.0,330.8 912.5,327.7 914.0,325.2 915.5,322.4 917.0,319.0 918.5,316.4 920.0,312.6 921.5,310.7 923.0,307.4 924.5,305.0 926.0,302.0 927.5,298.6 929.0,295.4 930.5,293.8 932.0,289.8 933.5,287.4 935.0,284.4 936.5,281.4 938.0,279.2 939.5,276.7 941.0,272.8 942.5,270.5 944.0,267.1 945.5,264.6 947.0,261.5 948.5,258.3 950.0,255.5 951.5,252.7 953.0,250.8 954.5,247.3 956.0,244.1 957.5,242.2 959.0,239.5 960.5,235.8 962.0,232.5 963.5,229.7 965.0,226.7 966.5,224.2 968.0,221.0 969.5,218.4 971.0,215.5 972.5,213.1 974.0,210.7 975.5,207.6 977.0,204.3 978.5,201.4 980.0,198.7 981.5,195.6 983.0,192.7 984.5,189.5 986.0,186.9 987.5,185.0 989.0,181.0 990.5,178.6 992.0,176.0 993.5,173.4 995.0,169.6 996.5,166.9 998.0,164.0 999.5,161.3 1001.0,162.3 1002.5,165.9 1004.0,168.6 1005.5,171.5 1007.0,173.2 1008.5,176.1 1010.0,179.9 1011.5,183.0 1013.0,185.3 1014.5,188.3 1016.0,190.3 1017.5,193.8 1019.0,197.4 1020.5,200.1 1022.0,203.0 1023.5,206.0 1025.0,207.9 1026.5,210.5 1028.0,213.5 1029.5,216.8 1031.0,219.9 1032.5,223.2 1034.0,225.7 1035.5,228.5 1037.0,231.5 1038.5,233.9 1040.0,236.9 1041.5,239.1 1043.0,243.0 1044.5,245.1 1046.0,248.9 1047.5,251.4 1049.0,253.8 1050.5,256.4 1052.0,259.4 1053.5,262.8 1055.0,265.8 1056.5,267.8 1058.0,270.6 1059.5,274.1 1061.0,277.1 1062.5,279.6 1064.0,282.3 1065.5,285.7 1067.0,287.7 1068.5,291.0 1070.0,294.1 1071.5,297.6 1073.0,300.0 1074.5,303.2 1076.0,305.5 1077.5,308.1 1079.0,310.9 1080.5,314.8 1082.0,317.3 1083.5,319.6 1085.0,322.1 1086.5,325.6 1088.0,328.7 1089.5,331.2 1091.0,333.9 1092.5,337.3 1094.0,340.5 1095.5,342.4 1097.0,345.0 1098.5,348.3 1100.0,346.5 1101.5,344.0 1103.0,340.5 1104.5,338.4 1106.0,335.5 1107.5,332.3 1109.0,329.0 1110.5,327.2 1112.0,323.4 1113.5,321.3 1115.0,317.6 1116.5,314.7 1118.0,312.6 1119.5,309.1 1121.0,307.2 1122.5,303.7 1124.0,300.4 1125.5,297.6 1127.0,295.0 1128.5,292.4 1130.0,290.0 1131.5,286.0 1133.0,283.5 1134.5,280.4 1136.0,278.6 1137.5,274.5 1139.0,271.5 1140.5,268.7 1142.0,266.3 1143.5,264.1 1145.0,261.3 1146.5,258.2 1148.0,255.7 1149.5,252.7 1151.0,249.0 1152.5,246.0 1154.0,244.1 1155.5,241.0 1157.0,237.2 1158.5,235.2 1160.0,231.9 1161.5,229.0" fill="none" stroke="#f99a26" stroke-width="3.5" stroke-linejoin="round" shape-rendering="crispEdges"/><path d="M211,155v57M408,155v57M606,155v57M803,155v57M1001,155v57M112,309v41M309,309v41M507,309v41M704,309v41M902,309v41M1099,309v41" stroke="#f99a26" stroke-width="2" fill="none" shape-rendering="crispEdges"/><polyline points="48.5,487.8 50.0,488.5 51.5,489.2 53.0,490.4 54.5,491.3 56.0,492.7 57.5,492.7 59.0,494.3 60.5,494.4 62.0,495.3 63.5,496.5 65.0,497.2 66.5,497.6 68.0,497.9 69.5,499.1 71.0,499.7 72.5,500.9 74.0,500.9 75.5,501.7 77.0,502.9 78.5,502.7 80.0,503.8 81.5,504.8 83.0,505.5 84.5,505.4 86.0,506.0 87.5,506.7 89.0,508.2 90.5,508.2 92.0,509.3 93.5,510.1 95.0,510.1 96.5,510.7 98.0,512.0 99.5,512.3 101.0,512.6 102.5,513.6 104.0,513.9 105.5,514.4 107.0,514.8 108.5,516.1 110.0,516.9 111.5,516.7 113.0,514.6 114.5,511.3 116.0,509.3 117.5,507.4 119.0,505.9 120.5,504.0 122.0,501.5 123.5,499.6 125.0,498.1 126.5,496.6 128.0,495.4 129.5,493.2 131.0,492.4 132.5,490.9 134.0,489.7 135.5,488.4 137.0,487.0 138.5,485.5 140.0,484.3 141.5,483.3 143.0,482.6 144.5,480.9 146.0,480.0 147.5,479.6 149.0,478.1 150.5,477.0 152.0,476.1 153.5,475.7 155.0,474.6 156.5,474.4 158.0,473.5 159.5,472.9 161.0,471.4 162.5,470.4 164.0,469.7 165.5,469.4 167.0,468.8 168.5,467.9 170.0,467.0 171.5,466.5 173.0,466.0 174.5,465.4 176.0,464.8 177.5,464.3 179.0,463.5 180.5,462.3 182.0,462.4 183.5,461.3 185.0,460.9 186.5,460.1 188.0,459.9 189.5,458.8 191.0,458.3 192.5,457.7 194.0,457.0 195.5,457.2 197.0,456.3 198.5,455.5 200.0,455.0 201.5,455.1 203.0,454.0 204.5,453.2 206.0,453.2 207.5,452.5 209.0,452.3 210.5,452.0 212.0,454.8 213.5,457.5 215.0,459.7 216.5,461.9 218.0,463.0 219.5,465.1 221.0,466.8 222.5,468.5 224.0,470.9 225.5,472.1 227.0,473.9 228.5,474.8 230.0,476.6 231.5,477.5 233.0,478.6 234.5,480.3 236.0,481.6 237.5,481.9 239.0,483.4 240.5,484.5 242.0,485.1 243.5,486.2 245.0,487.0 246.5,488.0 248.0,488.9 249.5,490.1 251.0,491.0 252.5,491.4 254.0,492.1 255.5,493.2 257.0,494.3 258.5,494.6 260.0,495.5 261.5,496.1 263.0,497.5 264.5,497.9 266.0,498.2 267.5,498.9 269.0,499.9 270.5,500.8 272.0,501.5 273.5,501.7 275.0,502.4 276.5,503.6 278.0,504.0 279.5,504.5 281.0,505.2 282.5,506.5 284.0,506.5 285.5,507.4 287.0,507.8 288.5,508.5 290.0,509.6 291.5,510.4 293.0,510.4 294.5,510.8 296.0,512.0 297.5,512.1 299.0,512.5 300.5,514.0 302.0,514.2 303.5,515.2 305.0,515.4 306.5,516.5 308.0,516.7 309.5,515.4 311.0,512.9 312.5,511.1 314.0,509.0 315.5,507.2 317.0,504.4 318.5,503.0 320.0,500.9 321.5,499.3 323.0,497.3 324.5,495.8 326.0,494.5 327.5,493.5 329.0,491.2 330.5,490.2 332.0,489.2 333.5,488.1 335.0,486.2 336.5,484.9 338.0,484.6 339.5,483.5 341.0,482.0 342.5,480.5 344.0,480.4 345.5,478.9 347.0,478.4 348.5,477.2 350.0,476.6 351.5,475.0 353.0,474.8 354.5,473.4 356.0,472.8 357.5,472.4 359.0,471.7 360.5,470.3 362.0,469.6 363.5,469.0 365.0,468.4 366.5,467.6 368.0,466.6 369.5,466.1 371.0,465.9 372.5,465.4 374.0,463.9 375.5,463.8 377.0,463.4 378.5,462.0 380.0,462.2 381.5,460.9 383.0,460.8 384.5,460.1 386.0,459.6 387.5,458.7 389.0,458.2 390.5,457.8 392.0,457.1 393.5,456.8 395.0,456.0 396.5,455.4 398.0,454.5 399.5,454.5 401.0,453.8 402.5,453.0 404.0,453.0 405.5,452.5 407.0,451.6 408.5,452.9 410.0,455.6 411.5,457.5 413.0,459.7 414.5,462.1 416.0,463.7 417.5,465.9 419.0,467.7 420.5,468.9 422.0,471.1 423.5,472.1 425.0,474.2 426.5,475.6 428.0,476.7 429.5,477.5 431.0,479.2 432.5,480.3 434.0,482.0 435.5,482.3 437.0,484.1 438.5,485.2 440.0,486.0 441.5,487.0 443.0,487.3 444.5,489.0 446.0,489.4 447.5,490.8 449.0,491.6 450.5,491.7 452.0,493.1 453.5,494.0 455.0,494.0 456.5,495.0 458.0,496.2 459.5,496.3 461.0,497.8 462.5,497.9 464.0,499.2 465.5,499.2 467.0,500.3 468.5,501.4 470.0,501.3 471.5,502.1 473.0,503.0 474.5,503.5 476.0,503.9 477.5,504.7 479.0,505.3 480.5,506.7 482.0,507.1 483.5,508.0 485.0,507.9 486.5,509.1 488.0,509.1 489.5,510.1 491.0,510.9 492.5,511.2 494.0,512.3 495.5,512.6 497.0,513.3 498.5,514.2 500.0,514.1 501.5,515.6 503.0,515.8 504.5,516.2 506.0,517.2 507.5,514.7 509.0,513.1 510.5,510.4 512.0,508.0 513.5,506.4 515.0,504.1 516.5,501.9 518.0,500.7 519.5,498.3 521.0,497.4 522.5,495.3 524.0,494.1 525.5,493.0 527.0,491.2 528.5,490.0 530.0,488.3 531.5,486.8 533.0,485.6 534.5,484.5 536.0,483.9 537.5,482.6 539.0,481.6 540.5,481.0 542.0,479.3 543.5,478.4 545.0,477.9 546.5,476.3 548.0,475.4 549.5,474.9 551.0,473.8 552.5,473.3 554.0,472.3 555.5,471.9 557.0,471.2 558.5,470.0 560.0,469.7 561.5,468.8 563.0,467.8 564.5,467.9 566.0,466.5 567.5,465.8 569.0,465.1 570.5,464.9 572.0,464.5 573.5,463.8 575.0,462.8 576.5,462.0 578.0,461.2 579.5,461.2 581.0,460.5 582.5,459.7 584.0,459.4 585.5,458.6 587.0,458.6 588.5,457.8 590.0,456.7 591.5,456.8 593.0,455.4 594.5,455.3 596.0,454.7 597.5,453.9 599.0,453.2 600.5,453.4 602.0,452.1 603.5,452.1 605.0,451.9 606.5,453.7 608.0,456.1 609.5,458.8 611.0,460.8 612.5,463.0 614.0,465.0 615.5,466.2 617.0,468.1 618.5,469.7 620.0,471.1 621.5,473.4 623.0,474.7 624.5,476.0 626.0,476.6 627.5,478.7 629.0,479.8 630.5,480.7 632.0,482.1 633.5,482.9 635.0,483.8 636.5,484.7 638.0,485.8 639.5,486.5 641.0,487.8 642.5,489.1 644.0,489.9 645.5,490.9 647.0,491.7 648.5,492.0 650.0,493.1 651.5,493.8 653.0,494.9 654.5,495.4 656.0,495.9 657.5,497.1 659.0,498.1 660.5,498.1 662.0,499.5 663.5,499.3 665.0,500.3 666.5,500.9 668.0,502.1 669.5,503.0 671.0,503.5 672.5,503.7 674.0,504.9 675.5,505.0 677.0,505.6 678.5,506.9 680.0,507.3 681.5,508.0 683.0,508.6 684.5,509.5 686.0,509.6 687.5,510.6 689.0,511.1 690.5,511.9 692.0,512.1 693.5,513.0 695.0,513.5 696.5,513.8 698.0,514.4 699.5,515.4 701.0,515.5 702.5,516.9 704.0,516.2 705.5,513.7 707.0,511.4 708.5,510.0 710.0,507.3 711.5,505.1 713.0,503.0 714.5,501.2 716.0,500.1 717.5,498.3 719.0,496.8 720.5,495.2 722.0,493.1 723.5,492.2 725.0,490.6 726.5,489.7 728.0,488.4 729.5,487.2 731.0,485.2 732.5,484.9 734.0,483.8 735.5,482.8 737.0,480.9 738.5,480.0 740.0,478.9 741.5,477.9 743.0,477.8 744.5,476.8 746.0,475.8 747.5,475.1 749.0,474.1 750.5,472.9 752.0,472.0 753.5,471.2 755.0,471.1 756.5,469.8 758.0,469.2 759.5,468.6 761.0,467.5 762.5,467.0 764.0,466.3 765.5,466.1 767.0,465.1 768.5,464.4 770.0,464.4 771.5,463.3 773.0,463.0 774.5,462.2 776.0,461.0 777.5,460.8 779.0,460.2 780.5,459.9 782.0,458.9 783.5,458.7 785.0,458.0 786.5,457.1 788.0,457.2 789.5,455.8 791.0,456.0 792.5,454.8 794.0,454.1 795.5,453.7 797.0,453.7 798.5,453.4 800.0,451.9 801.5,451.8 803.0,452.3 804.5,455.1 806.0,456.9 807.5,459.4 809.0,461.3 810.5,463.8 812.0,465.1 813.5,467.6 815.0,468.6 816.5,470.2 818.0,472.2 819.5,473.5 821.0,474.5 822.5,476.4 824.0,477.1 825.5,479.1 827.0,480.2 828.5,481.4 830.0,482.4 831.5,483.2 833.0,484.3 834.5,485.3 836.0,486.8 837.5,486.9 839.0,488.6 840.5,488.7 842.0,489.7 843.5,490.6 845.0,492.1 846.5,492.5 848.0,493.2 849.5,494.5 851.0,494.6 852.5,495.6 854.0,496.5 855.5,497.4 857.0,498.2 858.5,498.8 860.0,499.2 861.5,499.9 863.0,500.4 864.5,501.8 866.0,502.3 867.5,503.0 869.0,503.1 870.5,504.0 872.0,505.0 873.5,505.5 875.0,505.7 876.5,506.7 878.0,507.7 879.5,507.7 881.0,508.3 882.5,509.1 884.0,510.1 885.5,510.9 887.0,510.8 888.5,511.4 890.0,512.1 891.5,512.8 893.0,513.6 894.5,513.9 896.0,514.7 897.5,515.2 899.0,516.6 900.5,516.9 902.0,515.4 903.5,513.8 905.0,510.7 906.5,508.8 908.0,507.3 909.5,505.1 911.0,503.1 912.5,501.0 914.0,499.0 915.5,497.8 917.0,495.6 918.5,494.2 920.0,492.9 921.5,491.1 923.0,490.1 924.5,489.2 926.0,487.9 927.5,486.5 929.0,485.4 930.5,484.1 932.0,482.7 933.5,482.1 935.0,480.9 936.5,480.2 938.0,479.4 939.5,478.0 941.0,477.2 942.5,476.5 944.0,475.3 945.5,474.2 947.0,473.9 948.5,473.3 950.0,472.4 951.5,471.5 953.0,470.9 954.5,470.0 956.0,469.3 957.5,468.4 959.0,467.5 960.5,467.1 962.0,465.9 963.5,465.6 965.0,465.3 966.5,464.6 968.0,463.9 969.5,462.9 971.0,462.4 972.5,461.8 974.0,461.4 975.5,460.6 977.0,460.2 978.5,459.9 980.0,458.6 981.5,458.5 983.0,458.0 984.5,457.1 986.0,456.6 987.5,456.5 989.0,455.0 990.5,455.0 992.0,454.0 993.5,454.1 995.0,453.7 996.5,452.8 998.0,451.8 999.5,451.8 1001.0,453.2 1002.5,455.8 1004.0,457.9 1005.5,460.2 1007.0,462.5 1008.5,464.1 1010.0,465.9 1011.5,468.2 1013.0,469.1 1014.5,471.2 1016.0,472.4 1017.5,474.2 1019.0,475.0 1020.5,477.2 1022.0,477.8 1023.5,478.8 1025.0,480.2 1026.5,481.4 1028.0,482.1 1029.5,483.6 1031.0,484.6 1032.5,485.9 1034.0,486.5 1035.5,487.4 1037.0,488.3 1038.5,489.7 1040.0,490.8 1041.5,491.2 1043.0,491.7 1044.5,493.1 1046.0,493.5 1047.5,494.1 1049.0,494.8 1050.5,496.2 1052.0,497.0 1053.5,497.5 1055.0,498.1 1056.5,498.9 1058.0,499.3 1059.5,500.7 1061.0,500.8 1062.5,501.8 1064.0,502.6 1065.5,503.3 1067.0,503.6 1068.5,504.1 1070.0,505.0 1071.5,505.3 1073.0,506.6 1074.5,506.8 1076.0,507.9 1077.5,508.0 1079.0,508.7 1080.5,509.2 1082.0,510.0 1083.5,510.4 1085.0,510.9 1086.5,512.2 1088.0,512.4 1089.5,513.0 1091.0,513.6 1092.5,514.4 1094.0,515.0 1095.5,515.8 1097.0,516.4 1098.5,516.8 1100.0,515.4 1101.5,512.9 1103.0,509.9 1104.5,508.5 1106.0,506.5 1107.5,504.4 1109.0,501.9 1110.5,500.8 1112.0,498.9 1113.5,496.6 1115.0,495.0 1116.5,494.5 1118.0,492.7 1119.5,490.9 1121.0,489.4 1122.5,488.2 1124.0,487.0 1125.5,486.3 1127.0,484.7 1128.5,483.4 1130.0,483.1 1131.5,481.9 1133.0,480.3 1134.5,480.0 1136.0,478.8 1137.5,478.0 1139.0,477.0 1140.5,476.3 1142.0,475.4 1143.5,474.6 1145.0,473.1 1146.5,472.8 1148.0,471.9 1149.5,471.3 1151.0,470.3 1152.5,470.0 1154.0,468.9 1155.5,467.9 1157.0,467.2 1158.5,466.4 1160.0,466.1 1161.5,465.0" fill="none" stroke="#2b2bf6" stroke-width="3.3" stroke-linejoin="round" shape-rendering="crispEdges"/><path d="M211,451v28M408,451v28M606,451v28M803,451v28M1001,451v28M112,495v23M309,495v23M507,495v23M704,495v23M902,495v23M1099,495v23" stroke="#2b2bf6" stroke-width="2" fill="none" shape-rendering="crispEdges"/><path d="M1161,157.5 L1148.5,164.8 L1161,165.5z" fill="#ff8c00" stroke="#000" stroke-width="0.9"/><path d="M1161,345 L1148.5,345.7 L1161,353z" fill="#ff8c00" stroke="#000" stroke-width="0.9"/><rect x="48" y="159" width="1114" height="3" fill="#ff0000"/><rect x="48" y="349" width="1114" height="3" fill="#ff0000"/><rect x="48" y="448" width="1114" height="3" fill="#ff0000"/><rect x="48" y="519" width="1114" height="3" fill="#ff0000"/><rect x="306" y="105" width="3" height="561" fill="#ff0000"/><rect x="504" y="105" width="3" height="561" fill="#ff0000"/><path d="M49,479 L62,486 L49,493z" fill="#0000ff" stroke="#000" stroke-width="0.8"/><path d="M49,530 L62,537 L49,544z" fill="#ff8c00" stroke="#000" stroke-width="0.8"/><path d="M1161,249 L1148,256 L1161,263z" fill="#ff8c00" stroke="#000" stroke-width="0.8"/></svg>
<div class="t" style="left:1.5px;top:107.03px;font-size:12.4px;line-height:13.851px;color:#ff8c00;">7.7</div>
<div class="t" style="left:1.5px;top:161.73px;font-size:12.4px;line-height:13.851px;color:#ff8c00;">6.7</div>
<div class="t" style="left:1.5px;top:216.43px;font-size:12.4px;line-height:13.851px;color:#ff8c00;">5.7</div>
<div class="t" style="left:1.5px;top:271.13px;font-size:12.4px;line-height:13.851px;color:#ff8c00;">4.7</div>
<div class="t" style="left:1.5px;top:325.83px;font-size:12.4px;line-height:13.851px;color:#ff8c00;">3.7</div>
<div class="t" style="left:1.5px;top:380.53px;font-size:12.4px;line-height:13.851px;color:#ff8c00;">2.7</div>
<div class="t" style="left:1.5px;top:435.23px;font-size:12.4px;line-height:13.851px;color:#ff8c00;">1.7</div>
<div class="t" style="left:1.5px;top:489.93px;font-size:12.4px;line-height:13.851px;color:#ff8c00;">0.7</div>
<div class="t" style="left:1.5px;top:544.63px;font-size:12.4px;line-height:13.851px;color:#ff8c00;">-0.3</div>
<div class="t" style="left:1.5px;top:599.33px;font-size:12.4px;line-height:13.851px;color:#ff8c00;">-1.3</div>
<div class="t" style="left:1.5px;top:654.03px;font-size:12.4px;line-height:13.851px;color:#ff8c00;">-2.3</div>
<div class="t" style="left:35.5px;top:672.76px;font-size:12.7px;line-height:14.186px;color:#000;">-10 ms</div>
<div class="t" style="left:146.8px;top:672.76px;font-size:12.7px;line-height:14.186px;color:#000;">-8 ms</div>
<div class="t" style="left:258.1px;top:672.76px;font-size:12.7px;line-height:14.186px;color:#000;">-6 ms</div>
<div class="t" style="left:369.4px;top:672.76px;font-size:12.7px;line-height:14.186px;color:#000;">-4 ms</div>
<div class="t" style="left:480.7px;top:672.76px;font-size:12.7px;line-height:14.186px;color:#000;">-2 ms</div>
<div class="t" style="left:592.0px;top:672.76px;font-size:12.7px;line-height:14.186px;color:#000;">0 ms</div>
<div class="t" style="left:703.3px;top:672.76px;font-size:12.7px;line-height:14.186px;color:#000;">2 ms</div>
<div class="t" style="left:814.6px;top:672.76px;font-size:12.7px;line-height:14.186px;color:#000;">4 ms</div>
<div class="t" style="left:925.9px;top:672.76px;font-size:12.7px;line-height:14.186px;color:#000;">6 ms</div>
<div class="t" style="left:1037.1999999999998px;top:672.76px;font-size:12.7px;line-height:14.186px;color:#000;">8 ms</div>
<div class="t" style="left:1148.5px;top:672.76px;font-size:12.7px;line-height:14.186px;color:#000;">10 ms</div>
<div class="r" style="left:1px;top:669px;width:34px;height:21px;background:#fcfcfc;border:1px solid #d9d9d9;box-sizing:border-box;border-radius:4px;"></div>
<div class="t" style="left:5.5px;top:672.53px;font-size:13.5px;line-height:15.079px;color:#000;font-weight:bold;">X</div>
<div class="r" style="left:19px;top:671px;width:1px;height:17px;background:#777;"></div>
<svg class="r" style="left:22px;top:676px;" width="9" height="6" viewBox="0 0 9 6"><path d="M0,0 h9 l-4.5,5z" fill="#000"/></svg>
<div class="r" style="left:282px;top:669px;width:51px;height:21px;background:#fcfcfc;border:1px solid #d9d9d9;box-sizing:border-box;border-radius:4px;"></div>
<div class="r" style="left:318px;top:671px;width:1px;height:17px;background:#8c8c8c;"></div>
<svg class="r" style="left:321px;top:676px;" width="9" height="6" viewBox="0 0 9 6"><path d="M0,0 h9 l-4.5,5z" fill="#000"/></svg>
<div class="t" style="left:287.5px;top:673.26px;font-size:12.7px;line-height:14.186px;color:#000;">1Δ2</div>
<div class="r" style="left:479px;top:669px;width:52px;height:21px;background:#cce4f7;border:1px solid #2a6fb8;box-sizing:border-box;border-radius:4px;"></div>
<div class="r" style="left:516px;top:671px;width:1px;height:17px;background:#8c8c8c;"></div>
<svg class="r" style="left:519px;top:676px;" width="9" height="6" viewBox="0 0 9 6"><path d="M0,0 h9 l-4.5,5z" fill="#000"/></svg>
<div class="t" style="left:486.5px;top:673.26px;font-size:12.7px;line-height:14.186px;color:#000;">2Δ1</div>
<svg class="r" style="left:0px;top:0px;" width="1216" height="691" viewBox="0 0 1216 691"><path d="M1183.3,171.5h31.7M1182.4,172.5h32.6M1180.4,173.5h34.6M1179.1,174.5h35.9M1183.4,175.5h31.6M1181.7,176.5h33.3M1181.7,177.5h33.3M1183.9,178.5h31.1M1178.9,179.5h36.1M1179.8,180.5h35.2M1184.6,181.5h30.4M1180.9,182.5h34.1M1184.8,183.5h30.2M1181.7,184.5h33.3M1178.8,185.5h36.2M1178.6,186.5h36.4M1179.4,187.5h35.6M1178.5,188.5h36.5M1181.3,189.5h33.7M1178.2,190.5h36.8M1180.6,191.5h34.4M1181.4,192.5h33.6M1182.5,193.5h32.5M1180.9,194.5h34.1M1180.2,195.5h34.8M1179.0,196.5h36.0M1168.3,197.5h46.7M1178.2,198.5h36.8M1181.0,199.5h34.0M1183.5,200.5h31.5M1181.0,201.5h34.0M1184.6,202.5h30.4M1166.9,203.5h48.1M1178.0,204.5h37.0M1179.6,205.5h35.4M1184.7,206.5h30.3M1184.7,207.5h30.3M1182.7,208.5h32.3M1178.1,209.5h36.9M1178.0,210.5h37.0M1184.5,211.5h30.5M1179.1,212.5h35.9M1180.1,213.5h34.9M1178.9,214.5h36.1M1178.3,215.5h36.7M1182.4,216.5h32.6M1181.4,217.5h33.6M1180.8,218.5h34.2M1180.7,219.5h34.3M1181.5,220.5h33.5M1175.7,221.5h39.3M1178.2,222.5h36.8M1175.3,223.5h39.7M1172.3,224.5h42.7M1171.8,225.5h43.2M1181.7,226.5h33.3M1182.5,227.5h32.5M1179.0,228.5h36.0M1180.3,229.5h34.7M1183.2,230.5h31.8M1180.9,231.5h34.1M1182.5,232.5h32.5M1182.4,233.5h32.6M1182.9,234.5h32.1M1171.6,235.5h43.4M1179.9,236.5h35.1M1183.4,237.5h31.6M1177.2,238.5h37.8M1175.6,239.5h39.4M1182.7,240.5h32.3M1181.9,241.5h33.1M1183.8,242.5h31.2M1180.4,243.5h34.6M1180.1,244.5h34.9M1170.0,245.5h45.0M1175.2,246.5h39.8M1179.3,247.5h35.7M1179.4,248.5h35.6M1184.1,249.5h30.9M1179.4,250.5h35.6M1182.6,251.5h32.4M1182.1,252.5h32.9M1178.5,253.5h36.5M1178.4,254.5h36.6M1178.1,255.5h36.9M1178.3,256.5h36.7M1183.4,257.5h31.6M1179.1,258.5h35.9M1181.4,259.5h33.6M1181.7,260.5h33.3M1180.9,261.5h34.1M1166.7,262.5h48.3M1180.1,263.5h34.9M1178.7,264.5h36.3M1170.5,265.5h44.5M1183.8,266.5h31.2M1180.4,267.5h34.6M1182.1,268.5h32.9M1180.7,269.5h34.3M1183.2,270.5h31.8M1181.7,271.5h33.3M1175.1,272.5h39.9M1168.2,273.5h46.8M1178.5,274.5h36.5M1170.4,275.5h44.6M1175.2,276.5h39.8M1183.1,277.5h31.9M1182.0,278.5h33.0M1178.8,279.5h36.2M1183.2,280.5h31.8M1178.2,281.5h36.8M1184.4,282.5h30.6M1182.8,283.5h32.2M1182.5,284.5h32.5M1180.9,285.5h34.1M1183.7,286.5h31.3M1184.1,287.5h30.9M1180.0,288.5h35.0M1179.2,289.5h35.8M1180.8,290.5h34.2M1182.3,291.5h32.7M1180.6,292.5h34.4M1182.4,293.5h32.6M1180.1,294.5h34.9M1180.1,295.5h34.9M1183.3,296.5h31.7M1174.2,297.5h40.8M1182.0,298.5h33.0M1178.4,299.5h36.6M1178.7,300.5h36.3M1183.2,301.5h31.8M1184.1,302.5h30.9M1180.4,303.5h34.6M1179.5,304.5h35.5M1179.9,305.5h35.1M1184.3,306.5h30.7M1174.1,307.5h40.9M1183.3,308.5h31.7M1178.5,309.5h36.5M1167.3,310.5h47.7M1180.3,311.5h34.7M1178.3,312.5h36.7M1168.7,313.5h46.3M1181.4,314.5h33.6M1184.3,315.5h30.7M1173.9,316.5h41.1M1181.1,317.5h33.9M1179.8,318.5h35.2M1180.7,319.5h34.3M1182.2,320.5h32.8M1182.2,321.5h32.8M1175.1,322.5h39.9M1178.2,323.5h36.8M1170.1,324.5h44.9M1179.7,325.5h35.3M1181.4,326.5h33.6M1180.5,327.5h34.5M1173.5,328.5h41.5M1178.6,329.5h36.4M1181.9,330.5h33.1M1183.7,331.5h31.3M1183.6,332.5h31.4M1173.1,333.5h41.9M1178.3,334.5h36.7M1180.1,335.5h34.9M1179.0,336.5h36.0M1182.8,337.5h32.2M1181.6,338.5h33.4M1183.8,339.5h31.2M1182.7,340.5h32.3" stroke="#f99a26" stroke-width="1" fill="none"/><path d="M1182.9,461.5h32.1M1180.2,462.5h34.8M1180.3,463.5h34.7M1177.4,464.5h37.6M1180.1,465.5h34.9M1177.1,466.5h37.9M1178.1,467.5h36.9M1177.0,468.5h38.0M1178.3,469.5h36.7M1176.3,470.5h38.7M1178.4,471.5h36.6M1182.5,472.5h32.5M1177.1,473.5h37.9M1182.0,474.5h33.0M1181.5,475.5h33.5M1176.9,476.5h38.1M1177.3,477.5h37.7M1181.1,478.5h33.9M1173.9,479.5h41.1M1180.5,480.5h34.5M1182.3,481.5h32.7M1176.4,482.5h38.6M1175.8,483.5h39.2M1166.3,484.5h48.7M1163.6,485.5h51.4M1181.0,486.5h34.0M1177.9,487.5h37.1M1178.6,488.5h36.4M1177.6,489.5h37.4M1178.0,490.5h37.0M1178.6,491.5h36.4M1183.1,492.5h31.9M1181.2,493.5h33.8M1178.6,494.5h36.4M1182.5,495.5h32.5M1166.5,496.5h48.5M1165.7,497.5h49.3M1182.9,498.5h32.1M1178.2,499.5h36.8M1179.6,500.5h35.4M1180.3,501.5h34.7M1172.6,502.5h42.4M1178.0,503.5h37.0M1178.1,504.5h36.9M1181.9,505.5h33.1M1170.0,506.5h45.0M1182.0,507.5h33.0M1181.2,508.5h33.8M1180.8,509.5h34.2M1177.8,510.5h37.2" stroke="#2b2bf6" stroke-width="1" fill="none"/></svg>
<div class="r" style="left:1163px;top:149px;width:52px;height:22px;background:#fcfcfc;border:1px solid #d9d9d9;box-sizing:border-box;border-radius:4px;"></div>
<div class="r" style="left:1200px;top:151px;width:1px;height:18px;background:#8c8c8c;"></div>
<svg class="r" style="left:1203px;top:157px;" width="9" height="6" viewBox="0 0 9 6"><path d="M0,0 h9 l-4.5,5z" fill="#000"/></svg>
<div class="t" style="left:1169.5px;top:154.26px;font-size:12.7px;line-height:14.186px;color:#000;">2Δ1</div>
<div class="r" style="left:1163px;top:339px;width:52px;height:22px;background:#fcfcfc;border:1px solid #d9d9d9;box-sizing:border-box;border-radius:4px;"></div>
<div class="r" style="left:1200px;top:341px;width:1px;height:18px;background:#8c8c8c;"></div>
<svg class="r" style="left:1203px;top:347px;" width="9" height="6" viewBox="0 0 9 6"><path d="M0,0 h9 l-4.5,5z" fill="#000"/></svg>
<div class="t" style="left:1169.5px;top:344.26px;font-size:12.7px;line-height:14.186px;color:#000;">1Δ2</div>
<div class="r" style="left:1163px;top:438px;width:52px;height:22px;background:#cce4f7;border:1px solid #2a6fb8;box-sizing:border-box;border-radius:4px;"></div>
<div class="r" style="left:1200px;top:440px;width:1px;height:18px;background:#8c8c8c;"></div>
<svg class="r" style="left:1203px;top:446px;" width="9" height="6" viewBox="0 0 9 6"><path d="M0,0 h9 l-4.5,5z" fill="#000"/></svg>
<div class="t" style="left:1169.5px;top:443.26px;font-size:12.7px;line-height:14.186px;color:#000;">4Δ3</div>
<div class="r" style="left:1163px;top:509px;width:52px;height:22px;background:#fcfcfc;border:1px solid #d9d9d9;box-sizing:border-box;border-radius:4px;"></div>
<div class="r" style="left:1200px;top:511px;width:1px;height:18px;background:#8c8c8c;"></div>
<svg class="r" style="left:1203px;top:517px;" width="9" height="6" viewBox="0 0 9 6"><path d="M0,0 h9 l-4.5,5z" fill="#000"/></svg>
<div class="t" style="left:1169.5px;top:514.26px;font-size:12.7px;line-height:14.186px;color:#000;">3Δ4</div>
<div class="r" style="left:1216px;top:79px;width:1px;height:612px;background:#a9a9a9;"></div>
<div class="r" style="left:1217px;top:79px;width:4px;height:612px;background:#d9d9d9;"></div>
<div class="r" style="left:0px;top:691px;width:1692px;height:5px;background:#d9d9d9;"></div>
<div class="r" style="left:0px;top:691px;width:1692px;height:1px;background:#a0a0a0;"></div>
<div class="r" style="left:1221px;top:101px;width:471px;height:590px;background:#f0f0f0;"></div>
<div class="r" style="left:1221px;top:80px;width:471px;height:22px;background:#f0f0f0;border:1px solid #000;box-sizing:border-box;box-shadow:inset 0 0 0 1px #fff;"></div>
<div class="t" style="left:1225.5px;top:85.12px;font-size:12.85px;line-height:14.353px;color:#000;">Y Cursors</div>
<svg class="r" style="left:1631px;top:84px;" width="14" height="14" viewBox="0 0 14 14"><defs><linearGradient id="rg" x1="0" y1="0" x2="1" y2="1"><stop offset="0" stop-color="#ffffff"/><stop offset="1" stop-color="#dfe6f2"/></linearGradient></defs><rect x="0.75" y="0.75" width="10.5" height="9" rx="1" fill="url(#rg)" stroke="#9bb8e3" stroke-width="1.2"/><rect x="0.75" y="0.75" width="10.5" height="2.2" fill="#9bb8e3"/><rect x="3.6" y="4.2" width="10.6" height="9.2" rx="1" fill="url(#rg)" stroke="#7a9bd6" stroke-width="1.2"/><rect x="3.6" y="4.2" width="10.6" height="2" fill="#7a9bd6"/></svg>
<svg class="r" style="left:1652px;top:84px;" width="14" height="13" viewBox="0 0 14 13"><defs><radialGradient id="mg" cx="50%" cy="45%" r="60%"><stop offset="0" stop-color="#ffffff"/><stop offset="1" stop-color="#e2e6ee"/></radialGradient></defs><rect x="1" y="1" width="12.5" height="11.5" rx="1.2" fill="url(#mg)" stroke="#3c7ee0" stroke-width="1.8"/><path d="M2.5,2.5 h3 l-3,3z M12,2.5 h-3 l3,3z M2.5,11 h3 l-3,-3z M12,11 h-3 l3,-3z" fill="#ee7a3a"/></svg>
<svg class="r" style="left:1673px;top:84px;" width="14" height="14" viewBox="0 0 14 14"><defs><linearGradient id="cg" x1="0" y1="0" x2="1" y2="1"><stop offset="0" stop-color="#f5a0a0"/><stop offset="1" stop-color="#c00c0c"/></linearGradient></defs><path d="M2,2 L12.5,12.5 M12.5,2 L2,12.5" stroke="url(#cg)" stroke-width="3.6" stroke-linecap="round"/></svg>
<div class="r" style="left:1222px;top:102px;width:469px;height:29px;background:#f0f0f0;"></div>
<div class="r" style="left:1222px;top:131px;width:469px;height:1px;background:#a0a4aa;"></div>
<svg class="r" style="left:1228px;top:107px;" width="18" height="18" viewBox="0 0 18 18"><defs><linearGradient id="pg" x1="0" y1="0" x2="0.7" y2="1"><stop offset="0" stop-color="#c8f8ae"/><stop offset="1" stop-color="#3cbc12"/></linearGradient></defs><rect x="6.2" y="0.5" width="5.6" height="17.5" rx="2.2" fill="url(#pg)" stroke="#52a83a" stroke-width="0.5"/><rect x="0.3" y="6.2" width="17.4" height="5.6" rx="2.2" fill="url(#pg)" stroke="#52a83a" stroke-width="0.5"/><rect x="6.6" y="6.5" width="4.8" height="5" fill="#86de62"/></svg>
<div class="t" style="left:1247.5px;top:112.12px;font-size:12.85px;line-height:14.353px;color:#000;">Normal</div>
<div class="t" style="left:1308.5px;top:111.12px;font-size:12.85px;line-height:14.353px;color:#000;">Delta</div>
<svg class="r" style="left:1351px;top:113px;" width="18" height="7" viewBox="0 0 18 7"><defs><linearGradient id="ng" x1="0" y1="0" x2="1" y2="0.4"><stop offset="0" stop-color="#f9b0b0"/><stop offset="0.55" stop-color="#e04444"/><stop offset="1" stop-color="#c80000"/></linearGradient></defs><rect x="0.5" y="1" width="17" height="6" rx="2.5" fill="#6a3030" opacity="0.55"/><rect x="0.5" y="0" width="17" height="5.6" rx="2.5" fill="url(#ng)"/></svg>
<div class="t" style="left:1370.5px;top:112.12px;font-size:12.85px;line-height:14.353px;color:#000;">Clear</div>
<div class="r" style="left:1417px;top:107px;width:1px;height:20px;background:#d0d0d0;"></div>
<svg class="r" style="left:1425px;top:107px;" width="18" height="18" viewBox="0 0 18 18"><rect x="0.5" y="0.5" width="17" height="17" rx="1.5" fill="#f6f6f6" stroke="#c9c9c9"/><rect x="1" y="1" width="16" height="3" fill="#dcdcdc"/><rect x="2" y="7" width="3" height="3" fill="#2a86e0"/><rect x="2" y="12" width="3" height="3" fill="#2a86e0"/><path d="M6,8.5 h9 M6,13.5 h9 M6,11 h7" stroke="#9a9a9a" stroke-width="0.8"/></svg>
<div class="t" style="left:1445.5px;top:112.12px;font-size:12.85px;line-height:14.353px;color:#000;">Show</div>
<svg class="r" style="left:1484px;top:121px;" width="8" height="5" viewBox="0 0 8 5"><path d="M0,0 h8 l-4,4.5z" fill="#000"/></svg>
<div class="r" style="left:1221px;top:101px;width:1px;height:590px;background:#80858e;"></div>
<div class="r" style="left:1691px;top:131px;width:1px;height:560px;background:#80858e;"></div>
<div class="r" style="left:1221px;top:690px;width:471px;height:1px;background:#80858e;"></div>
<div class="r" style="left:1222px;top:132px;width:449px;height:558px;background:#fff;"></div>
<div class="r" style="left:1671px;top:132px;width:20px;height:558px;background:#f0f0f0;"></div>
<div class="r" style="left:1222px;top:261px;width:17px;height:429px;background:#f0f0f0;"></div>
<div class="r" style="left:1239px;top:132px;width:1px;height:129px;background:#dcdcdc;"></div>
<div class="r" style="left:1300px;top:132px;width:1px;height:129px;background:#dcdcdc;"></div>
<div class="r" style="left:1434px;top:132px;width:1px;height:129px;background:#dcdcdc;"></div>
<div class="r" style="left:1493px;top:132px;width:1px;height:129px;background:#dcdcdc;"></div>
<div class="r" style="left:1627px;top:132px;width:1px;height:129px;background:#dcdcdc;"></div>
<div class="r" style="left:1669px;top:132px;width:1px;height:129px;background:#dcdcdc;"></div>
<div class="r" style="left:1239px;top:157px;width:431px;height:1px;background:#dcdcdc;"></div>
<div class="r" style="left:1239px;top:183px;width:431px;height:1px;background:#dcdcdc;"></div>
<div class="r" style="left:1239px;top:209px;width:431px;height:1px;background:#dcdcdc;"></div>
<div class="r" style="left:1239px;top:235px;width:431px;height:1px;background:#dcdcdc;"></div>
<div class="r" style="left:1239px;top:261px;width:431px;height:1px;background:#dcdcdc;"></div>
<div class="t" style="left:1238.5px;top:139.12px;font-size:12.85px;line-height:14.353px;color:#000;width:61px;text-align:center;">Channel</div>
<div class="t" style="left:1299.5px;top:139.12px;font-size:12.85px;line-height:14.353px;color:#000;width:134px;text-align:center;">Position</div>
<div class="t" style="left:1433.5px;top:139.12px;font-size:12.85px;line-height:14.353px;color:#000;width:59px;text-align:center;">Ref</div>
<div class="t" style="left:1492.5px;top:139.12px;font-size:12.85px;line-height:14.353px;color:#000;width:134px;text-align:center;">Δ</div>
<svg class="r" style="left:1676px;top:139px;" width="11" height="8" viewBox="0 0 11 8"><path d="M0,7 h11 l-5.5,-6.5z" fill="#a6a6a6"/></svg>
<svg class="r" style="left:1676px;top:676px;" width="11" height="8" viewBox="0 0 11 8"><path d="M0,0 h11 l-5.5,6.5z" fill="#a6a6a6"/></svg>
<div class="t" style="left:1226.5px;top:165.12px;font-size:12.85px;line-height:14.353px;color:#000;">1</div>
<div class="r" style="left:1241px;top:158px;width:58px;height:22px;background:#fdfdfd;border:1px solid #d6d6d6;box-sizing:border-box;border-radius:2px;"></div>
<div class="t" style="left:1244.5px;top:163.12px;font-size:12.85px;line-height:14.353px;color:#000;">C1</div>
<svg class="r" style="left:1284px;top:166px;" width="10" height="6" viewBox="0 0 10 6"><polyline points="0.5,0.5 5,5 9.5,0.5" fill="none" stroke="#404040" stroke-width="1"/></svg>
<div class="r" style="left:1302px;top:158px;width:131px;height:22px;background:#fff;border-bottom:1px solid #6e6e6e;box-sizing:border-box;border-radius:2px 2px 0 0;"></div>
<div class="t" style="left:1305.5px;top:163.12px;font-size:12.85px;line-height:14.353px;color:#000;">3.304982206 V</div>
<svg class="r" style="left:1417px;top:166px;" width="10" height="6" viewBox="0 0 10 6"><polyline points="0.5,0.5 5,5 9.5,0.5" fill="none" stroke="#404040" stroke-width="1"/></svg>
<div class="r" style="left:1436px;top:158px;width:56px;height:22px;background:#fdfdfd;border:1px solid #d6d6d6;box-sizing:border-box;border-radius:2px;"></div>
<div class="t" style="left:1439.5px;top:163.12px;font-size:12.85px;line-height:14.353px;color:#000;">2</div>
<svg class="r" style="left:1476px;top:166px;" width="10" height="6" viewBox="0 0 10 6"><polyline points="0.5,0.5 5,5 9.5,0.5" fill="none" stroke="#404040" stroke-width="1"/></svg>
<div class="r" style="left:1495px;top:158px;width:131px;height:22px;background:#fff;border-bottom:1px solid #6e6e6e;box-sizing:border-box;border-radius:2px 2px 0 0;"></div>
<div class="t" style="left:1498.5px;top:163.12px;font-size:12.85px;line-height:14.353px;color:#000;">-3.3985765125 V</div>
<svg class="r" style="left:1610px;top:166px;" width="10" height="6" viewBox="0 0 10 6"><polyline points="0.5,0.5 5,5 9.5,0.5" fill="none" stroke="#404040" stroke-width="1"/></svg>
<svg class="r" style="left:1639px;top:167px;" width="18" height="7" viewBox="0 0 18 7"><defs><linearGradient id="ng" x1="0" y1="0" x2="1" y2="0.4"><stop offset="0" stop-color="#f9b0b0"/><stop offset="0.55" stop-color="#e04444"/><stop offset="1" stop-color="#c80000"/></linearGradient></defs><rect x="0.5" y="1" width="17" height="6" rx="2.5" fill="#6a3030" opacity="0.55"/><rect x="0.5" y="0" width="17" height="5.6" rx="2.5" fill="url(#ng)"/></svg>
<div class="t" style="left:1226.5px;top:191.12px;font-size:12.85px;line-height:14.353px;color:#000;">2</div>
<div class="r" style="left:1241px;top:184px;width:58px;height:22px;background:#fdfdfd;border:1px solid #d6d6d6;box-sizing:border-box;border-radius:2px;"></div>
<div class="t" style="left:1244.5px;top:189.12px;font-size:12.85px;line-height:14.353px;color:#000;">C1</div>
<svg class="r" style="left:1284px;top:192px;" width="10" height="6" viewBox="0 0 10 6"><polyline points="0.5,0.5 5,5 9.5,0.5" fill="none" stroke="#404040" stroke-width="1"/></svg>
<div class="r" style="left:1302px;top:184px;width:131px;height:22px;background:#fff;border-bottom:1px solid #6e6e6e;box-sizing:border-box;border-radius:2px 2px 0 0;"></div>
<div class="t" style="left:1305.5px;top:189.12px;font-size:12.85px;line-height:14.353px;color:#000;">6.703558719 V</div>
<svg class="r" style="left:1417px;top:192px;" width="10" height="6" viewBox="0 0 10 6"><polyline points="0.5,0.5 5,5 9.5,0.5" fill="none" stroke="#404040" stroke-width="1"/></svg>
<div class="r" style="left:1436px;top:184px;width:56px;height:22px;background:#fdfdfd;border:1px solid #d6d6d6;box-sizing:border-box;border-radius:2px;"></div>
<div class="t" style="left:1439.5px;top:189.12px;font-size:12.85px;line-height:14.353px;color:#000;">1</div>
<svg class="r" style="left:1476px;top:192px;" width="10" height="6" viewBox="0 0 10 6"><polyline points="0.5,0.5 5,5 9.5,0.5" fill="none" stroke="#404040" stroke-width="1"/></svg>
<div class="r" style="left:1495px;top:184px;width:131px;height:22px;background:#fff;border-bottom:1px solid #6e6e6e;box-sizing:border-box;border-radius:2px 2px 0 0;"></div>
<div class="t" style="left:1498.5px;top:189.12px;font-size:12.85px;line-height:14.353px;color:#000;">3.398576512 V</div>
<svg class="r" style="left:1610px;top:192px;" width="10" height="6" viewBox="0 0 10 6"><polyline points="0.5,0.5 5,5 9.5,0.5" fill="none" stroke="#404040" stroke-width="1"/></svg>
<svg class="r" style="left:1639px;top:193px;" width="18" height="7" viewBox="0 0 18 7"><defs><linearGradient id="ng" x1="0" y1="0" x2="1" y2="0.4"><stop offset="0" stop-color="#f9b0b0"/><stop offset="0.55" stop-color="#e04444"/><stop offset="1" stop-color="#c80000"/></linearGradient></defs><rect x="0.5" y="1" width="17" height="6" rx="2.5" fill="#6a3030" opacity="0.55"/><rect x="0.5" y="0" width="17" height="5.6" rx="2.5" fill="url(#ng)"/></svg>
<div class="t" style="left:1226.5px;top:217.12px;font-size:12.85px;line-height:14.353px;color:#000;">3</div>
<div class="r" style="left:1241px;top:210px;width:58px;height:22px;background:#fdfdfd;border:1px solid #d6d6d6;box-sizing:border-box;border-radius:2px;"></div>
<div class="t" style="left:1244.5px;top:215.12px;font-size:12.85px;line-height:14.353px;color:#000;">C2</div>
<svg class="r" style="left:1284px;top:218px;" width="10" height="6" viewBox="0 0 10 6"><polyline points="0.5,0.5 5,5 9.5,0.5" fill="none" stroke="#404040" stroke-width="1"/></svg>
<div class="r" style="left:1302px;top:210px;width:131px;height:22px;background:#fff;border-bottom:1px solid #6e6e6e;box-sizing:border-box;border-radius:2px 2px 0 0;"></div>
<svg class="r" style="left:1417px;top:218px;" width="10" height="6" viewBox="0 0 10 6"><polyline points="0.5,0.5 5,5 9.5,0.5" fill="none" stroke="#404040" stroke-width="1"/></svg>
<div class="t" style="left:1306px;top:212px;width:103px;overflow:hidden;font-size:12.7px;line-height:20px;">-602.135231317 m</div>
<div class="r" style="left:1436px;top:210px;width:56px;height:22px;background:#fdfdfd;border:1px solid #d6d6d6;box-sizing:border-box;border-radius:2px;"></div>
<div class="t" style="left:1439.5px;top:215.12px;font-size:12.85px;line-height:14.353px;color:#000;">4</div>
<svg class="r" style="left:1476px;top:218px;" width="10" height="6" viewBox="0 0 10 6"><polyline points="0.5,0.5 5,5 9.5,0.5" fill="none" stroke="#404040" stroke-width="1"/></svg>
<div class="r" style="left:1495px;top:210px;width:131px;height:22px;background:#fff;border-bottom:1px solid #6e6e6e;box-sizing:border-box;border-radius:2px 2px 0 0;"></div>
<div class="t" style="left:1498.5px;top:215.12px;font-size:12.85px;line-height:14.353px;color:#000;">-1.2455516014 V</div>
<svg class="r" style="left:1610px;top:218px;" width="10" height="6" viewBox="0 0 10 6"><polyline points="0.5,0.5 5,5 9.5,0.5" fill="none" stroke="#404040" stroke-width="1"/></svg>
<svg class="r" style="left:1639px;top:219px;" width="18" height="7" viewBox="0 0 18 7"><defs><linearGradient id="ng" x1="0" y1="0" x2="1" y2="0.4"><stop offset="0" stop-color="#f9b0b0"/><stop offset="0.55" stop-color="#e04444"/><stop offset="1" stop-color="#c80000"/></linearGradient></defs><rect x="0.5" y="1" width="17" height="6" rx="2.5" fill="#6a3030" opacity="0.55"/><rect x="0.5" y="0" width="17" height="5.6" rx="2.5" fill="url(#ng)"/></svg>
<div class="t" style="left:1226.5px;top:243.12px;font-size:12.85px;line-height:14.353px;color:#000;">4</div>
<div class="r" style="left:1241px;top:236px;width:58px;height:22px;background:#fdfdfd;border:1px solid #d6d6d6;box-sizing:border-box;border-radius:2px;"></div>
<div class="t" style="left:1244.5px;top:241.12px;font-size:12.85px;line-height:14.353px;color:#000;">C2</div>
<svg class="r" style="left:1284px;top:244px;" width="10" height="6" viewBox="0 0 10 6"><polyline points="0.5,0.5 5,5 9.5,0.5" fill="none" stroke="#404040" stroke-width="1"/></svg>
<div class="r" style="left:1302px;top:236px;width:131px;height:22px;background:#fff;border-bottom:1px solid #6e6e6e;box-sizing:border-box;border-radius:2px 2px 0 0;"></div>
<div class="t" style="left:1305.5px;top:241.12px;font-size:12.85px;line-height:14.353px;color:#000;">643.4163701 mV</div>
<svg class="r" style="left:1417px;top:244px;" width="10" height="6" viewBox="0 0 10 6"><polyline points="0.5,0.5 5,5 9.5,0.5" fill="none" stroke="#404040" stroke-width="1"/></svg>
<div class="r" style="left:1436px;top:236px;width:56px;height:22px;background:#fdfdfd;border:1px solid #d6d6d6;box-sizing:border-box;border-radius:2px;"></div>
<div class="t" style="left:1439.5px;top:241.12px;font-size:12.85px;line-height:14.353px;color:#000;">3</div>
<svg class="r" style="left:1476px;top:244px;" width="10" height="6" viewBox="0 0 10 6"><polyline points="0.5,0.5 5,5 9.5,0.5" fill="none" stroke="#404040" stroke-width="1"/></svg>
<div class="r" style="left:1495px;top:236px;width:131px;height:22px;background:#fff;border-bottom:1px solid #6e6e6e;box-sizing:border-box;border-radius:2px 2px 0 0;"></div>
<div class="t" style="left:1498.5px;top:241.12px;font-size:12.85px;line-height:14.353px;color:#000;">1.245551601 V</div>
<svg class="r" style="left:1610px;top:244px;" width="10" height="6" viewBox="0 0 10 6"><polyline points="0.5,0.5 5,5 9.5,0.5" fill="none" stroke="#404040" stroke-width="1"/></svg>
<svg class="r" style="left:1639px;top:245px;" width="18" height="7" viewBox="0 0 18 7"><defs><linearGradient id="ng" x1="0" y1="0" x2="1" y2="0.4"><stop offset="0" stop-color="#f9b0b0"/><stop offset="0.55" stop-color="#e04444"/><stop offset="1" stop-color="#c80000"/></linearGradient></defs><rect x="0.5" y="1" width="17" height="6" rx="2.5" fill="#6a3030" opacity="0.55"/><rect x="0.5" y="0" width="17" height="5.6" rx="2.5" fill="url(#ng)"/></svg>
<div class="r" style="left:1692px;top:79px;width:222px;height:860px;background:#f0f0f0;"></div>
<div class="r" style="left:1691px;top:131px;width:1px;height:560px;background:#80858e;"></div>
<div class="r" style="left:1891px;top:102px;width:1px;height:837px;background:#fbfbfb;"></div>
<div class="r" style="left:1692px;top:102px;width:1px;height:837px;background:#fdfdfd;"></div>
<svg class="r" style="left:1697px;top:86px;" width="14" height="10" viewBox="0 0 14 10"><defs><linearGradient id="ag" x1="0" y1="0" x2="0" y2="1"><stop offset="0" stop-color="#b6e59e"/><stop offset="1" stop-color="#4aa836"/></linearGradient></defs><path d="M0.5,3.3 h8.2 v-2.6 l4.8,4.3 -4.8,4.3 v-2.6 h-8.2z" fill="url(#ag)" stroke="#5aa845" stroke-width="0.5"/></svg>
<svg class="r" style="left:1897px;top:108px;" width="10" height="8" viewBox="0 0 10 8"><path d="M0,7 h10 l-5,-6.5z" fill="#a6a6a6"/></svg>
<svg class="r" style="left:1897px;top:923px;" width="10" height="8" viewBox="0 0 10 8"><path d="M0,0 h10 l-5,6.5z" fill="#a6a6a6"/></svg>
<div class="r" style="left:1695px;top:102px;width:192px;height:97px;border:4px solid #000;box-sizing:border-box;"></div>
<svg class="r" style="left:1699px;top:108px;" width="16" height="16" viewBox="0 0 16 16"><rect x="0.5" y="0.5" width="15" height="15" rx="3" fill="#0a64c8" stroke="#0a58b4"/><path d="M3.8,8 l3,3 l5.5,-5.5" fill="none" stroke="#fff" stroke-width="1.3"/></svg>
<div class="t" style="left:1720.5px;top:110.12px;font-size:12.85px;line-height:14.353px;color:#000;">Time</div>
<div class="r" style="left:1858px;top:107px;width:24px;height:17px;background:#f8f8f8;border:1px solid #d4d4d4;box-sizing:border-box;border-radius:4px;"></div>
<svg class="r" style="left:1861px;top:107px;" width="19" height="19" viewBox="0 0 19 19"><g transform="scale(0.9)"><defs><radialGradient id="gg" cx="40%" cy="35%" r="70%"><stop offset="0" stop-color="#f4f5f6"/><stop offset="1" stop-color="#a9afb5"/></radialGradient></defs><path d="M14.70,9.59 L16.23,10.54 L15.56,12.26 L13.80,11.91 L12.55,13.33 L13.11,15.04 L11.50,15.92 L10.36,14.52 L8.50,14.80 L7.83,16.47 L6.03,16.11 L6.06,14.31 L4.45,13.33 L2.86,14.18 L1.72,12.74 L2.90,11.38 L2.30,9.59 L0.53,9.23 L0.58,7.39 L2.36,7.10 L3.04,5.35 L1.93,3.93 L3.15,2.55 L4.69,3.48 L6.35,2.58 L6.40,0.78 L8.22,0.50 L8.81,2.21 L10.65,2.58 L11.86,1.24 L13.43,2.20 L12.78,3.88 L13.96,5.35 L15.74,5.09 L16.33,6.84 L14.75,7.71z" fill="url(#gg)" stroke="#7d858c" stroke-width="0.9"/><circle cx="8.5" cy="8.5" r="3.6" fill="#56616b"/><circle cx="9.6" cy="7.8" r="2.5" fill="#eef0f2"/><path d="M11,13 h7 l-3.5,4 z" fill="#000"/></g></svg>
<div class="t" style="left:1703.5px;top:132.12px;font-size:12.85px;line-height:14.353px;color:#000;">Position:</div>
<div class="r" style="left:1773px;top:128px;width:108px;height:20px;background:#fff;border-bottom:1px solid #6e6e6e;box-sizing:border-box;border-radius:2px 2px 0 0;"></div>
<div class="t" style="left:1776.5px;top:132.12px;font-size:12.85px;line-height:14.353px;color:#000;">0 s</div>
<svg class="r" style="left:1866px;top:135px;" width="10" height="6" viewBox="0 0 10 6"><polyline points="0.5,0.5 5,5 9.5,0.5" fill="none" stroke="#404040" stroke-width="1"/></svg>
<div class="t" style="left:1703.5px;top:155.12px;font-size:12.85px;line-height:14.353px;color:#000;">Base:</div>
<div class="r" style="left:1773px;top:151px;width:108px;height:20px;background:#fff;border-bottom:1px solid #6e6e6e;box-sizing:border-box;border-radius:2px 2px 0 0;"></div>
<div class="t" style="left:1776.5px;top:155.12px;font-size:12.85px;line-height:14.353px;color:#000;">2 ms/div</div>
<svg class="r" style="left:1866px;top:158px;" width="10" height="6" viewBox="0 0 10 6"><polyline points="0.5,0.5 5,5 9.5,0.5" fill="none" stroke="#404040" stroke-width="1"/></svg>
<div class="r" style="left:1700px;top:173px;width:181px;height:20px;background:#cce4f7;border:1px solid #99ccf3;box-sizing:border-box;border-radius:3px;"></div>
<svg class="r" style="left:1708px;top:174px;" width="10" height="18" viewBox="0 0 10 18"><defs><linearGradient id="dg" x1="0" y1="0" x2="1" y2="0"><stop offset="0" stop-color="#c4efb0"/><stop offset="1" stop-color="#3d9a2a"/></linearGradient></defs><path d="M3.5,1 h3 v10.5 h3 l-4.5,6 -4.5,-6 h3z" fill="url(#dg)" stroke="#4f9a3a" stroke-width="0.5"/></svg>
<div class="t" style="left:1722.5px;top:179.12px;font-size:12.85px;line-height:14.353px;color:#000;">Rate, Samples...</div>
<svg class="r" style="left:1699px;top:203px;" width="19" height="19" viewBox="0 0 19 19"><defs><radialGradient id="gg" cx="40%" cy="35%" r="70%"><stop offset="0" stop-color="#f4f5f6"/><stop offset="1" stop-color="#a9afb5"/></radialGradient></defs><path d="M14.70,9.59 L16.23,10.54 L15.56,12.26 L13.80,11.91 L12.55,13.33 L13.11,15.04 L11.50,15.92 L10.36,14.52 L8.50,14.80 L7.83,16.47 L6.03,16.11 L6.06,14.31 L4.45,13.33 L2.86,14.18 L1.72,12.74 L2.90,11.38 L2.30,9.59 L0.53,9.23 L0.58,7.39 L2.36,7.10 L3.04,5.35 L1.93,3.93 L3.15,2.55 L4.69,3.48 L6.35,2.58 L6.40,0.78 L8.22,0.50 L8.81,2.21 L10.65,2.58 L11.86,1.24 L13.43,2.20 L12.78,3.88 L13.96,5.35 L15.74,5.09 L16.33,6.84 L14.75,7.71z" fill="url(#gg)" stroke="#7d858c" stroke-width="0.9"/><circle cx="8.5" cy="8.5" r="3.6" fill="#56616b"/><circle cx="9.6" cy="7.8" r="2.5" fill="#eef0f2"/></svg>
<div class="t" style="left:1721.5px;top:208.12px;font-size:12.85px;line-height:14.353px;color:#000;">Options</div>
<svg class="r" style="left:1870px;top:212px;" width="9" height="6" viewBox="0 0 9 6"><path d="M0,0 h9 l-4.5,5z" fill="#000"/></svg>
<div class="r" style="left:1696px;top:230px;width:189px;height:27px;background:#fcfcfc;border:1px solid #d9d9d9;box-sizing:border-box;border-radius:4px;"></div>
<svg class="r" style="left:1700px;top:233px;" width="18" height="18" viewBox="0 0 18 18"><defs><linearGradient id="pg" x1="0" y1="0" x2="0.7" y2="1"><stop offset="0" stop-color="#c8f8ae"/><stop offset="1" stop-color="#3cbc12"/></linearGradient></defs><rect x="6.2" y="0.5" width="5.6" height="17.5" rx="2.2" fill="url(#pg)" stroke="#52a83a" stroke-width="0.5"/><rect x="0.3" y="6.2" width="17.4" height="5.6" rx="2.2" fill="url(#pg)" stroke="#52a83a" stroke-width="0.5"/><rect x="6.6" y="6.5" width="4.8" height="5" fill="#86de62"/></svg>
<div class="t" style="left:1722.5px;top:238.12px;font-size:12.85px;line-height:14.353px;color:#000;">Add Channel</div>
<svg class="r" style="left:1870px;top:242px;" width="9" height="6" viewBox="0 0 9 6"><path d="M0,0 h9 l-4.5,5z" fill="#000"/></svg>
<div class="r" style="left:1695px;top:259px;width:192px;height:75px;border:4px solid #ff8c00;box-sizing:border-box;"></div>
<svg class="r" style="left:1699px;top:265px;" width="16" height="16" viewBox="0 0 16 16"><rect x="0.5" y="0.5" width="15" height="15" rx="3" fill="#0a64c8" stroke="#0a58b4"/><path d="M3.8,8 l3,3 l5.5,-5.5" fill="none" stroke="#fff" stroke-width="1.3"/></svg>
<div class="t" style="left:1720.5px;top:267.12px;font-size:12.85px;line-height:14.353px;color:#000;">Channel 1 (1±)</div>
<div class="r" style="left:1858px;top:264px;width:24px;height:17px;background:#f8f8f8;border:1px solid #d4d4d4;box-sizing:border-box;border-radius:4px;"></div>
<svg class="r" style="left:1861px;top:264px;" width="19" height="19" viewBox="0 0 19 19"><g transform="scale(0.9)"><defs><radialGradient id="gg" cx="40%" cy="35%" r="70%"><stop offset="0" stop-color="#f4f5f6"/><stop offset="1" stop-color="#a9afb5"/></radialGradient></defs><path d="M14.70,9.59 L16.23,10.54 L15.56,12.26 L13.80,11.91 L12.55,13.33 L13.11,15.04 L11.50,15.92 L10.36,14.52 L8.50,14.80 L7.83,16.47 L6.03,16.11 L6.06,14.31 L4.45,13.33 L2.86,14.18 L1.72,12.74 L2.90,11.38 L2.30,9.59 L0.53,9.23 L0.58,7.39 L2.36,7.10 L3.04,5.35 L1.93,3.93 L3.15,2.55 L4.69,3.48 L6.35,2.58 L6.40,0.78 L8.22,0.50 L8.81,2.21 L10.65,2.58 L11.86,1.24 L13.43,2.20 L12.78,3.88 L13.96,5.35 L15.74,5.09 L16.33,6.84 L14.75,7.71z" fill="url(#gg)" stroke="#7d858c" stroke-width="0.9"/><circle cx="8.5" cy="8.5" r="3.6" fill="#56616b"/><circle cx="9.6" cy="7.8" r="2.5" fill="#eef0f2"/><path d="M11,13 h7 l-3.5,4 z" fill="#000"/></g></svg>
<div class="t" style="left:1703.5px;top:289.12px;font-size:12.85px;line-height:14.353px;color:#000;">Offset:</div>
<div class="r" style="left:1773px;top:285px;width:108px;height:20px;background:#fff;border-bottom:1px solid #6e6e6e;box-sizing:border-box;border-radius:2px 2px 0 0;"></div>
<div class="t" style="left:1776.5px;top:289.12px;font-size:12.85px;line-height:14.353px;color:#000;">-2.7 V</div>
<svg class="r" style="left:1866px;top:292px;" width="10" height="6" viewBox="0 0 10 6"><polyline points="0.5,0.5 5,5 9.5,0.5" fill="none" stroke="#404040" stroke-width="1"/></svg>
<div class="t" style="left:1703.5px;top:312.12px;font-size:12.85px;line-height:14.353px;color:#000;">Range:</div>
<div class="r" style="left:1773px;top:308px;width:108px;height:20px;background:#fff;border-bottom:1px solid #6e6e6e;box-sizing:border-box;border-radius:2px 2px 0 0;"></div>
<div class="t" style="left:1776.5px;top:312.12px;font-size:12.85px;line-height:14.353px;color:#000;">1 V/div</div>
<svg class="r" style="left:1866px;top:315px;" width="10" height="6" viewBox="0 0 10 6"><polyline points="0.5,0.5 5,5 9.5,0.5" fill="none" stroke="#404040" stroke-width="1"/></svg>
<div class="r" style="left:1695px;top:335px;width:192px;height:75px;border:4px solid #0000ff;box-sizing:border-box;"></div>
<svg class="r" style="left:1699px;top:341px;" width="16" height="16" viewBox="0 0 16 16"><rect x="0.5" y="0.5" width="15" height="15" rx="3" fill="#0a64c8" stroke="#0a58b4"/><path d="M3.8,8 l3,3 l5.5,-5.5" fill="none" stroke="#fff" stroke-width="1.3"/></svg>
<div class="t" style="left:1720.5px;top:343.12px;font-size:12.85px;line-height:14.353px;color:#000;">Channel 2 (2±)</div>
<div class="r" style="left:1858px;top:340px;width:24px;height:17px;background:#f8f8f8;border:1px solid #d4d4d4;box-sizing:border-box;border-radius:4px;"></div>
<svg class="r" style="left:1861px;top:340px;" width="19" height="19" viewBox="0 0 19 19"><g transform="scale(0.9)"><defs><radialGradient id="gg" cx="40%" cy="35%" r="70%"><stop offset="0" stop-color="#f4f5f6"/><stop offset="1" stop-color="#a9afb5"/></radialGradient></defs><path d="M14.70,9.59 L16.23,10.54 L15.56,12.26 L13.80,11.91 L12.55,13.33 L13.11,15.04 L11.50,15.92 L10.36,14.52 L8.50,14.80 L7.83,16.47 L6.03,16.11 L6.06,14.31 L4.45,13.33 L2.86,14.18 L1.72,12.74 L2.90,11.38 L2.30,9.59 L0.53,9.23 L0.58,7.39 L2.36,7.10 L3.04,5.35 L1.93,3.93 L3.15,2.55 L4.69,3.48 L6.35,2.58 L6.40,0.78 L8.22,0.50 L8.81,2.21 L10.65,2.58 L11.86,1.24 L13.43,2.20 L12.78,3.88 L13.96,5.35 L15.74,5.09 L16.33,6.84 L14.75,7.71z" fill="url(#gg)" stroke="#7d858c" stroke-width="0.9"/><circle cx="8.5" cy="8.5" r="3.6" fill="#56616b"/><circle cx="9.6" cy="7.8" r="2.5" fill="#eef0f2"/><path d="M11,13 h7 l-3.5,4 z" fill="#000"/></g></svg>
<div class="t" style="left:1703.5px;top:365.12px;font-size:12.85px;line-height:14.353px;color:#000;">Offset:</div>
<div class="r" style="left:1773px;top:361px;width:108px;height:20px;background:#fff;border-bottom:1px solid #6e6e6e;box-sizing:border-box;border-radius:2px 2px 0 0;"></div>
<div class="t" style="left:1776.5px;top:365.12px;font-size:12.85px;line-height:14.353px;color:#000;">-1.8 V</div>
<svg class="r" style="left:1866px;top:368px;" width="10" height="6" viewBox="0 0 10 6"><polyline points="0.5,0.5 5,5 9.5,0.5" fill="none" stroke="#404040" stroke-width="1"/></svg>
<div class="t" style="left:1703.5px;top:388.12px;font-size:12.85px;line-height:14.353px;color:#000;">Range:</div>
<div class="r" style="left:1773px;top:384px;width:108px;height:20px;background:#fff;border-bottom:1px solid #6e6e6e;box-sizing:border-box;border-radius:2px 2px 0 0;"></div>
<div class="t" style="left:1776.5px;top:388.12px;font-size:12.85px;line-height:14.353px;color:#000;">1 V/div</div>
<svg class="r" style="left:1866px;top:391px;" width="10" height="6" viewBox="0 0 10 6"><polyline points="0.5,0.5 5,5 9.5,0.5" fill="none" stroke="#404040" stroke-width="1"/></svg>
<div class="r" style="left:1698px;top:411px;width:73px;height:23px;background:#cce4f7;border:1px solid #99ccf3;box-sizing:border-box;border-radius:3px;"></div>
<svg class="r" style="left:1707px;top:413px;" width="10" height="19" viewBox="0 0 10 19"><defs><linearGradient id="dg" x1="0" y1="0" x2="1" y2="0"><stop offset="0" stop-color="#c4efb0"/><stop offset="1" stop-color="#3d9a2a"/></linearGradient></defs><path d="M3.5,1 h3 v11.5 h3 l-4.5,6 -4.5,-6 h3z" fill="url(#dg)" stroke="#4f9a3a" stroke-width="0.5"/></svg>
<div class="t" style="left:1723.5px;top:418.12px;font-size:12.85px;line-height:14.353px;color:#000;">Filters</div>
<div class="r" style="left:1774px;top:411px;width:112px;height:23px;background:#cce4f7;border:1px solid #99ccf3;box-sizing:border-box;border-radius:3px;"></div>
<svg class="r" style="left:1783px;top:413px;" width="10" height="19" viewBox="0 0 10 19"><defs><linearGradient id="dg" x1="0" y1="0" x2="1" y2="0"><stop offset="0" stop-color="#c4efb0"/><stop offset="1" stop-color="#3d9a2a"/></linearGradient></defs><path d="M3.5,1 h3 v11.5 h3 l-4.5,6 -4.5,-6 h3z" fill="url(#dg)" stroke="#4f9a3a" stroke-width="0.5"/></svg>
<div class="t" style="left:1799.5px;top:418.12px;font-size:12.85px;line-height:14.353px;color:#000;">Wavegens</div>
<div class="r" style="left:0px;top:696px;width:1692px;height:243px;background:#f0f0f0;"></div>
<div class="r" style="left:0px;top:696px;width:1692px;height:22px;background:#f0f0f0;border:1px solid #000;box-sizing:border-box;box-shadow:inset 0 0 0 1px #fff;"></div>
<div class="t" style="left:4.5px;top:701.12px;font-size:12.85px;line-height:14.353px;color:#000;">X Cursors</div>
<svg class="r" style="left:1631px;top:700px;" width="14" height="14" viewBox="0 0 14 14"><defs><linearGradient id="rg" x1="0" y1="0" x2="1" y2="1"><stop offset="0" stop-color="#ffffff"/><stop offset="1" stop-color="#dfe6f2"/></linearGradient></defs><rect x="0.75" y="0.75" width="10.5" height="9" rx="1" fill="url(#rg)" stroke="#9bb8e3" stroke-width="1.2"/><rect x="0.75" y="0.75" width="10.5" height="2.2" fill="#9bb8e3"/><rect x="3.6" y="4.2" width="10.6" height="9.2" rx="1" fill="url(#rg)" stroke="#7a9bd6" stroke-width="1.2"/><rect x="3.6" y="4.2" width="10.6" height="2" fill="#7a9bd6"/></svg>
<svg class="r" style="left:1652px;top:700px;" width="14" height="13" viewBox="0 0 14 13"><defs><radialGradient id="mg" cx="50%" cy="45%" r="60%"><stop offset="0" stop-color="#ffffff"/><stop offset="1" stop-color="#e2e6ee"/></radialGradient></defs><rect x="1" y="1" width="12.5" height="11.5" rx="1.2" fill="url(#mg)" stroke="#3c7ee0" stroke-width="1.8"/><path d="M2.5,2.5 h3 l-3,3z M12,2.5 h-3 l3,3z M2.5,11 h3 l-3,-3z M12,11 h-3 l3,-3z" fill="#ee7a3a"/></svg>
<svg class="r" style="left:1673px;top:700px;" width="14" height="14" viewBox="0 0 14 14"><defs><linearGradient id="cg" x1="0" y1="0" x2="1" y2="1"><stop offset="0" stop-color="#f5a0a0"/><stop offset="1" stop-color="#c00c0c"/></linearGradient></defs><path d="M2,2 L12.5,12.5 M12.5,2 L2,12.5" stroke="url(#cg)" stroke-width="3.6" stroke-linecap="round"/></svg>
<div class="r" style="left:1px;top:718px;width:1690px;height:29px;background:#f0f0f0;"></div>
<div class="r" style="left:1px;top:747px;width:1690px;height:1px;background:#a0a4aa;"></div>
<svg class="r" style="left:7px;top:723px;" width="18" height="18" viewBox="0 0 18 18"><defs><linearGradient id="pg" x1="0" y1="0" x2="0.7" y2="1"><stop offset="0" stop-color="#c8f8ae"/><stop offset="1" stop-color="#3cbc12"/></linearGradient></defs><rect x="6.2" y="0.5" width="5.6" height="17.5" rx="2.2" fill="url(#pg)" stroke="#52a83a" stroke-width="0.5"/><rect x="0.3" y="6.2" width="17.4" height="5.6" rx="2.2" fill="url(#pg)" stroke="#52a83a" stroke-width="0.5"/><rect x="6.6" y="6.5" width="4.8" height="5" fill="#86de62"/></svg>
<div class="t" style="left:26.5px;top:728.12px;font-size:12.85px;line-height:14.353px;color:#000;">Normal</div>
<div class="t" style="left:87.5px;top:727.12px;font-size:12.85px;line-height:14.353px;color:#000;">Delta</div>
<svg class="r" style="left:130px;top:729px;" width="18" height="7" viewBox="0 0 18 7"><defs><linearGradient id="ng" x1="0" y1="0" x2="1" y2="0.4"><stop offset="0" stop-color="#f9b0b0"/><stop offset="0.55" stop-color="#e04444"/><stop offset="1" stop-color="#c80000"/></linearGradient></defs><rect x="0.5" y="1" width="17" height="6" rx="2.5" fill="#6a3030" opacity="0.55"/><rect x="0.5" y="0" width="17" height="5.6" rx="2.5" fill="url(#ng)"/></svg>
<div class="t" style="left:149.5px;top:728.12px;font-size:12.85px;line-height:14.353px;color:#000;">Clear</div>
<div class="r" style="left:196px;top:723px;width:1px;height:20px;background:#d0d0d0;"></div>
<svg class="r" style="left:204px;top:723px;" width="18" height="18" viewBox="0 0 18 18"><rect x="0.5" y="0.5" width="17" height="17" rx="1.5" fill="#f6f6f6" stroke="#c9c9c9"/><rect x="1" y="1" width="16" height="3" fill="#dcdcdc"/><rect x="2" y="7" width="3" height="3" fill="#2a86e0"/><rect x="2" y="12" width="3" height="3" fill="#2a86e0"/><path d="M6,8.5 h9 M6,13.5 h9 M6,11 h7" stroke="#9a9a9a" stroke-width="0.8"/></svg>
<div class="t" style="left:224.5px;top:728.12px;font-size:12.85px;line-height:14.353px;color:#000;">Show</div>
<svg class="r" style="left:263px;top:737px;" width="8" height="5" viewBox="0 0 8 5"><path d="M0,0 h8 l-4,4.5z" fill="#000"/></svg>
<div class="r" style="left:0px;top:718px;width:1px;height:221px;background:#80858e;"></div>
<div class="r" style="left:1691px;top:718px;width:1px;height:221px;background:#80858e;"></div>
<div class="r" style="left:0px;top:938px;width:1692px;height:1px;background:#80858e;"></div>
<div class="r" style="left:1px;top:748px;width:1669px;height:190px;background:#fff;"></div>
<div class="r" style="left:1670px;top:748px;width:21px;height:190px;background:#f0f0f0;"></div>
<div class="r" style="left:1px;top:825px;width:17px;height:113px;background:#f0f0f0;"></div>
<div class="r" style="left:18px;top:748px;width:1px;height:77px;background:#dcdcdc;"></div>
<div class="r" style="left:240px;top:748px;width:1px;height:77px;background:#dcdcdc;"></div>
<div class="r" style="left:299px;top:748px;width:1px;height:77px;background:#dcdcdc;"></div>
<div class="r" style="left:521px;top:748px;width:1px;height:77px;background:#dcdcdc;"></div>
<div class="r" style="left:743px;top:748px;width:1px;height:77px;background:#dcdcdc;"></div>
<div class="r" style="left:964px;top:748px;width:1px;height:77px;background:#dcdcdc;"></div>
<div class="r" style="left:1185px;top:748px;width:1px;height:77px;background:#dcdcdc;"></div>
<div class="r" style="left:1406px;top:748px;width:1px;height:77px;background:#dcdcdc;"></div>
<div class="r" style="left:1627px;top:748px;width:1px;height:77px;background:#dcdcdc;"></div>
<div class="r" style="left:1669px;top:748px;width:1px;height:77px;background:#dcdcdc;"></div>
<div class="r" style="left:18px;top:774px;width:503px;height:1px;background:#dcdcdc;"></div>
<div class="r" style="left:18px;top:799px;width:1652px;height:1px;background:#dcdcdc;"></div>
<div class="r" style="left:18px;top:825px;width:1652px;height:1px;background:#dcdcdc;"></div>
<div class="t" style="left:17.5px;top:755.26px;font-size:12.7px;line-height:14.186px;color:#000;width:222px;text-align:center;">Position</div>
<div class="t" style="left:239.5px;top:755.26px;font-size:12.7px;line-height:14.186px;color:#000;width:59px;text-align:center;">Ref</div>
<div class="t" style="left:298.5px;top:755.26px;font-size:12.7px;line-height:14.186px;color:#000;width:222px;text-align:center;">Δ X</div>
<div class="t" style="left:520.5px;top:755.53px;font-size:12.4px;line-height:13.851px;color:#000;width:222px;text-align:center;">1/ΔX</div>
<div class="t" style="left:742.5px;top:755.53px;font-size:12.4px;line-height:13.851px;color:#000;width:221px;text-align:center;">C1</div>
<div class="t" style="left:963.5px;top:755.53px;font-size:12.4px;line-height:13.851px;color:#000;width:221px;text-align:center;">C1 ΔY</div>
<div class="t" style="left:1184.5px;top:755.53px;font-size:12.4px;line-height:13.851px;color:#000;width:221px;text-align:center;">C2</div>
<div class="t" style="left:1405.5px;top:755.53px;font-size:12.4px;line-height:13.851px;color:#000;width:221px;text-align:center;">C2 ΔY</div>
<svg class="r" style="left:1676px;top:755px;" width="11" height="8" viewBox="0 0 11 8"><path d="M0,7 h11 l-5.5,-6.5z" fill="#a6a6a6"/></svg>
<svg class="r" style="left:1676px;top:924px;" width="11" height="8" viewBox="0 0 11 8"><path d="M0,0 h11 l-5.5,6.5z" fill="#a6a6a6"/></svg>
<div class="t" style="left:5.5px;top:780.12px;font-size:12.85px;line-height:14.353px;color:#000;">1</div>
<div class="r" style="left:20px;top:775px;width:219px;height:21px;background:#fff;border-bottom:1px solid #6e6e6e;box-sizing:border-box;border-radius:2px 2px 0 0;"></div>
<div class="t" style="left:23.5px;top:779.12px;font-size:12.85px;line-height:14.353px;color:#000;">-5.329215565 ms</div>
<svg class="r" style="left:223px;top:782px;" width="10" height="6" viewBox="0 0 10 6"><polyline points="0.5,0.5 5,5 9.5,0.5" fill="none" stroke="#404040" stroke-width="1"/></svg>
<div class="r" style="left:242px;top:775px;width:56px;height:21px;background:#fdfdfd;border:1px solid #d6d6d6;box-sizing:border-box;border-radius:2px;"></div>
<div class="t" style="left:245.5px;top:779.12px;font-size:12.85px;line-height:14.353px;color:#000;">2</div>
<svg class="r" style="left:282px;top:782px;" width="10" height="6" viewBox="0 0 10 6"><polyline points="0.5,0.5 5,5 9.5,0.5" fill="none" stroke="#404040" stroke-width="1"/></svg>
<div class="r" style="left:301px;top:775px;width:219px;height:21px;background:#fff;border-bottom:1px solid #6e6e6e;box-sizing:border-box;border-radius:2px 2px 0 0;"></div>
<div class="t" style="left:304.5px;top:779.12px;font-size:12.85px;line-height:14.353px;color:#000;">-3.542927733 ms</div>
<svg class="r" style="left:504px;top:782px;" width="10" height="6" viewBox="0 0 10 6"><polyline points="0.5,0.5 5,5 9.5,0.5" fill="none" stroke="#404040" stroke-width="1"/></svg>
<div class="t" style="left:524.5px;top:780.26px;font-size:12.7px;line-height:14.186px;color:#000;">-282.25244 Hz</div>
<div class="t" style="left:746.5px;top:780.26px;font-size:12.7px;line-height:14.186px;color:#000;">3.3432 V</div>
<div class="t" style="left:967.5px;top:780.26px;font-size:12.7px;line-height:14.186px;color:#000;">-15.1951 mV</div>
<div class="t" style="left:1188.5px;top:780.26px;font-size:12.7px;line-height:14.186px;color:#000;">-0.596143 V</div>
<div class="t" style="left:1409.5px;top:780.26px;font-size:12.7px;line-height:14.186px;color:#000;">-8.1581 mV</div>
<svg class="r" style="left:1640px;top:783px;" width="18" height="7" viewBox="0 0 18 7"><defs><linearGradient id="ng" x1="0" y1="0" x2="1" y2="0.4"><stop offset="0" stop-color="#f9b0b0"/><stop offset="0.55" stop-color="#e04444"/><stop offset="1" stop-color="#c80000"/></linearGradient></defs><rect x="0.5" y="1" width="17" height="6" rx="2.5" fill="#6a3030" opacity="0.55"/><rect x="0.5" y="0" width="17" height="5.6" rx="2.5" fill="url(#ng)"/></svg>
<div class="t" style="left:5.5px;top:806.12px;font-size:12.85px;line-height:14.353px;color:#000;">2</div>
<div class="r" style="left:20px;top:801px;width:219px;height:21px;background:#fff;border-bottom:1px solid #6e6e6e;box-sizing:border-box;border-radius:2px 2px 0 0;"></div>
<div class="t" style="left:23.5px;top:805.12px;font-size:12.85px;line-height:14.353px;color:#000;">-1.786287832 ms</div>
<svg class="r" style="left:223px;top:808px;" width="10" height="6" viewBox="0 0 10 6"><polyline points="0.5,0.5 5,5 9.5,0.5" fill="none" stroke="#404040" stroke-width="1"/></svg>
<div class="r" style="left:242px;top:801px;width:56px;height:21px;background:#fdfdfd;border:1px solid #d6d6d6;box-sizing:border-box;border-radius:2px;"></div>
<div class="t" style="left:245.5px;top:805.12px;font-size:12.85px;line-height:14.353px;color:#000;">1</div>
<svg class="r" style="left:282px;top:808px;" width="10" height="6" viewBox="0 0 10 6"><polyline points="0.5,0.5 5,5 9.5,0.5" fill="none" stroke="#404040" stroke-width="1"/></svg>
<div class="r" style="left:301px;top:801px;width:219px;height:21px;background:#fff;border-bottom:1px solid #6e6e6e;box-sizing:border-box;border-radius:2px 2px 0 0;"></div>
<div class="t" style="left:304.5px;top:805.12px;font-size:12.85px;line-height:14.353px;color:#000;">3.542927733 ms</div>
<svg class="r" style="left:504px;top:808px;" width="10" height="6" viewBox="0 0 10 6"><polyline points="0.5,0.5 5,5 9.5,0.5" fill="none" stroke="#404040" stroke-width="1"/></svg>
<div class="t" style="left:524.5px;top:806.26px;font-size:12.7px;line-height:14.186px;color:#000;">282.25 Hz</div>
<div class="t" style="left:746.5px;top:806.26px;font-size:12.7px;line-height:14.186px;color:#000;">3.3584 V</div>
<div class="t" style="left:967.5px;top:806.26px;font-size:12.7px;line-height:14.186px;color:#000;">15.2 mV</div>
<div class="t" style="left:1188.5px;top:806.26px;font-size:12.7px;line-height:14.186px;color:#000;">-0.587985 V</div>
<div class="t" style="left:1409.5px;top:806.26px;font-size:12.7px;line-height:14.186px;color:#000;">8.158 mV</div>
<svg class="r" style="left:1640px;top:809px;" width="18" height="7" viewBox="0 0 18 7"><defs><linearGradient id="ng" x1="0" y1="0" x2="1" y2="0.4"><stop offset="0" stop-color="#f9b0b0"/><stop offset="0.55" stop-color="#e04444"/><stop offset="1" stop-color="#c80000"/></linearGradient></defs><rect x="0.5" y="1" width="17" height="6" rx="2.5" fill="#6a3030" opacity="0.55"/><rect x="0.5" y="0" width="17" height="5.6" rx="2.5" fill="url(#ng)"/></svg>
</body></html>
